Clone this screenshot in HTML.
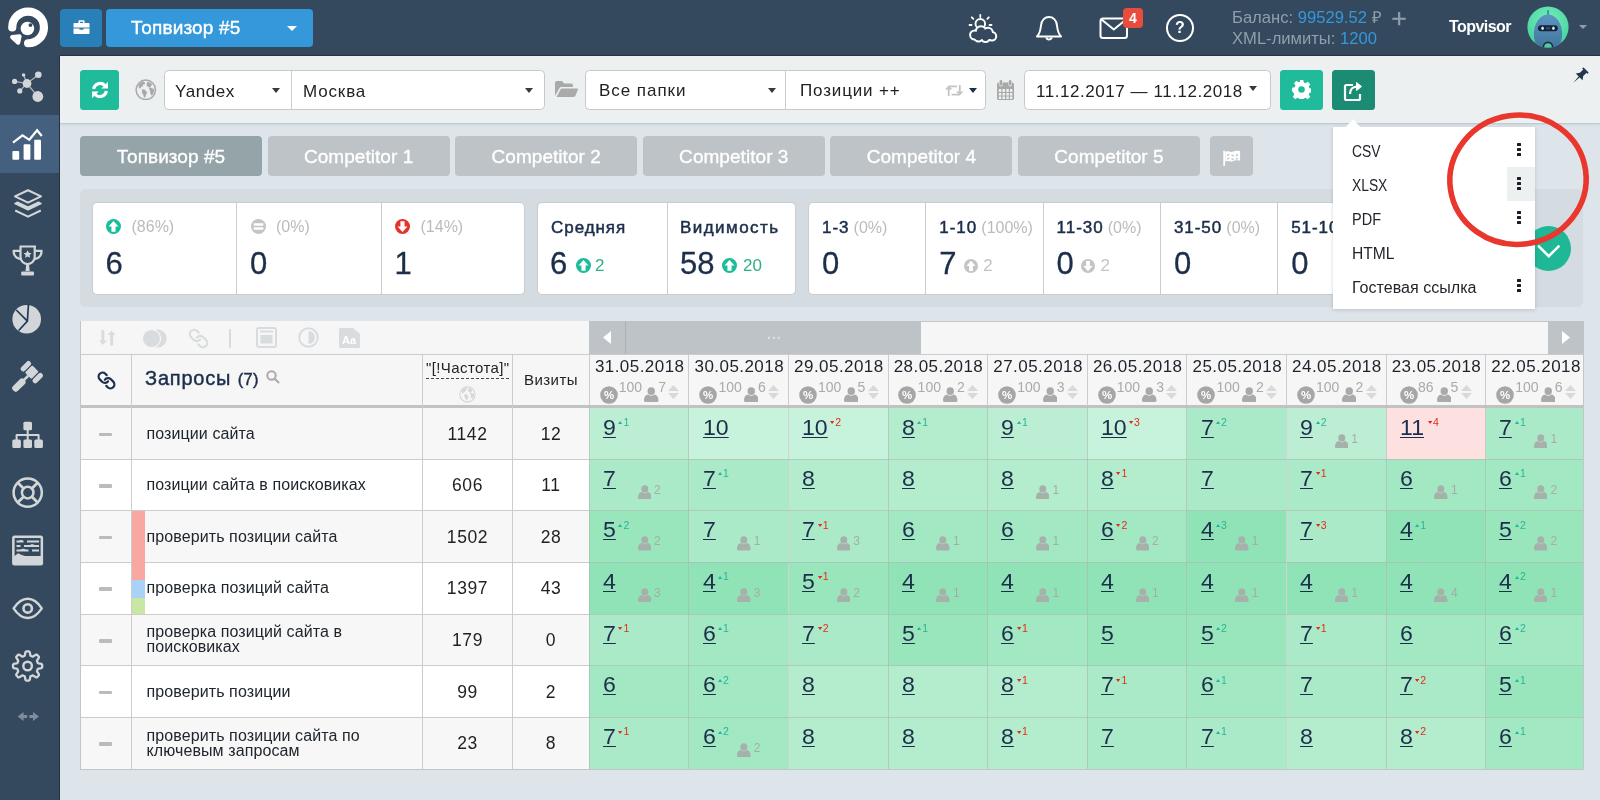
<!DOCTYPE html>
<html lang="ru"><head><meta charset="utf-8"><title>Топвизор</title><style>
*{box-sizing:border-box;margin:0;padding:0}
html,body{width:1600px;height:800px;overflow:hidden}
body{position:relative;background:#dee5ea;font-family:"Liberation Sans",sans-serif;color:#222;font-size:15px}
.a{position:absolute}
.t{position:absolute;white-space:nowrap;line-height:1}
#wrap{position:absolute;left:0;top:0;width:1600px;height:800px;will-change:transform}
#top{left:0;top:0;width:1600px;height:56px;background:#34495e;border-bottom:1px solid #1f2e3e}
#side{left:0;top:0;width:60px;height:800px;background:#34495e}
#sideb{left:59px;top:56px;width:1px;height:744px;background:#223243;z-index:3}
#toolbar{left:60px;top:56px;width:1540px;height:66.5px;background:#ecf0f1;box-shadow:0 1px 2px rgba(150,165,175,.6)}
.sel{position:absolute;top:69.500px;height:40px;background:#fff;border:1.500px solid #c6c9cb;border-radius:4.500px}
.sel .t{top:10px;font-size:17px;color:#222}
.caret{position:absolute;width:0;height:0;border-left:4.700px solid transparent;border-right:4.700px solid transparent;border-top:5px solid #3a3a3a}
.gbtn{position:absolute;top:69.500px;height:40px;border-radius:3.500px;background:#1fbb9b}
.tab{position:absolute;top:136px;height:40px;width:182px;border-radius:4px;background:#bdc3c7;color:#fff;font-size:19px;text-align:center;line-height:41.500px;letter-spacing:0.05px;-webkit-text-stroke:0.35px #fff}
.tab.act{background:#95a4a8}
#panel{left:80px;top:189px;width:1503px;height:118px;background:#d4dce1;border-radius:6px}
.card{position:absolute;top:202.300px;height:92.500px;background:#fff;border:1px solid #c8cdd0;border-radius:5px;overflow:hidden}
.cdiv{position:absolute;top:0;width:1px;height:93px;background:#ccc}
.big{position:absolute;white-space:nowrap;line-height:1;font-size:31px;color:#1c2e4a;top:248.300px;-webkit-text-stroke:0.3px #1c2e4a}
.pct{position:absolute;white-space:nowrap;line-height:1;font-size:16px;color:#bbb;top:219px}
.lbl{position:absolute;white-space:nowrap;line-height:1;font-size:17px;color:#1c2e4a;top:219px;letter-spacing:0.95px;-webkit-text-stroke:0.5px #1c2e4a}
.sm{position:absolute;white-space:nowrap;line-height:1;font-size:17px;top:257px}
#tbl{left:80px;top:320.500px;width:1504px;height:449px;background:#fff;border:1px solid #c2c6c9}
.vl{position:absolute;width:1px;background:#ccc}
.hl{position:absolute;height:1px;background:#ccc}
.kw{position:absolute;white-space:nowrap;line-height:15px;font-size:16px;color:#20262e;left:146.5px;letter-spacing:0.1px}
.num{position:absolute;white-space:nowrap;line-height:1;font-size:17.5px;color:#222;text-align:center;letter-spacing:0.6px}
.pos{position:absolute;white-space:nowrap;line-height:1;font-size:22px;color:#1c2e4a;text-decoration:underline;text-underline-offset:2.300px;text-decoration-thickness:1.100px;transform:scaleX(1.05);transform-origin:0 0}
.d{position:absolute;white-space:nowrap;line-height:1;font-size:10.5px}
.du{color:#2ab595}.dd{color:#e62a1a}
.vn{position:absolute;white-space:nowrap;line-height:1;font-size:12px;color:#a4ada8}
.date{position:absolute;white-space:nowrap;line-height:1;font-size:17px;color:#1d232b;top:358px;letter-spacing:0.45px}
.hs{position:absolute;white-space:nowrap;line-height:1;font-size:14px;color:#aaa}
.dash{position:absolute;left:98.5px;width:13.5px;height:3.5px;background:#bbb;border-radius:1px}
#dd{left:1333px;top:127px;width:202px;height:182px;background:#fff;box-shadow:0 1px 4px rgba(0,0,0,.16)}
.ddi{position:absolute;left:1351.800px;white-space:nowrap;line-height:1;font-size:16px;color:#22262c}
.dots{position:absolute;left:1517px;width:4px;height:14px}
.dots i{position:absolute;left:0;width:3.800px;height:2.800px;background:#1a1d24;border-radius:.6px}
</style></head><body><div id="wrap">
<div class="a" id="top"></div>
<div class="a" id="side"></div>
<div class="a" id="sideb"></div>
<div class="a" style="left:0;top:114.500px;width:60px;height:58.500px;background:#45607e"></div>
<div class="a" style="left:60.300px;top:8.500px;width:41.600px;height:38.500px;background:#2980b9;border-radius:4px"></div>
<svg class="a" style="left:73px;top:20px" width="17" height="15" viewBox="0 0 17 15"><path d="M5.5 3V1.2C5.5.6 6 .2 6.5.2h4c.6 0 1 .4 1 1V3h4c.6 0 1 .5 1 1v3.5H.5V4c0-.5.5-1 1-1zM7 3h3V1.7H7zM.5 8.5h6v1.3h4V8.5h6V13c0 .6-.4 1-1 1h-14c-.5 0-1-.4-1-1z" fill="#fff"/></svg>
<div class="a" style="left:106px;top:8.500px;width:206.800px;height:38.500px;background:#3498db;border-radius:4px"></div>
<div class="t" style="left:131px;top:18px;font-size:19px;color:#fff;letter-spacing:0.15px;-webkit-text-stroke:0.4px #fff">Топвизор #5</div>
<div class="a" style="left:287px;top:26.300px;width:0;height:0;border-left:5.200px solid transparent;border-right:5.200px solid transparent;border-top:5.400px solid #fff"></div>
<svg class="a" style="left:965px;top:10px" width="36" height="36" viewBox="0 0 36 36"><circle cx="15.300" cy="13.800" r="4.800" fill="none" stroke="#fff" stroke-width="1.900"/><g stroke="#fff" stroke-width="1.800" stroke-linecap="round"><path d="M15.300 4.800v2.200M6.800 7.300l1.500 1.500M23.800 7.300l-1.500 1.500M4.500 15h2M24.500 15h2"/></g><circle cx="9.7" cy="25.0" r="5.6" fill="#fff"/><circle cx="16.0" cy="21.5" r="6.3" fill="#fff"/><circle cx="23.0" cy="22.6" r="5.8" fill="#fff"/><circle cx="27.0" cy="26.2" r="5.2" fill="#fff"/><circle cx="13.5" cy="27.3" r="5.2" fill="#fff"/><circle cx="20.5" cy="27.6" r="5.4" fill="#fff"/><circle cx="9.7" cy="25.0" r="3.6" fill="#34495e"/><circle cx="16.0" cy="21.5" r="4.3" fill="#34495e"/><circle cx="23.0" cy="22.6" r="3.8" fill="#34495e"/><circle cx="27.0" cy="26.2" r="3.2" fill="#34495e"/><circle cx="13.5" cy="27.3" r="3.2" fill="#34495e"/><circle cx="20.5" cy="27.6" r="3.4" fill="#34495e"/><rect x="10" y="22" width="17" height="7" fill="#34495e"/></svg>
<svg class="a" style="left:1034px;top:14px" width="30" height="28" viewBox="0 0 30 28" fill="none" stroke="#fff" stroke-width="2" stroke-linejoin="round"><path d="M3 22.500c3-3 3.500-6 4-11C7.600 6 11 3 15 3s7.400 3 8 8.500c.5 5 1 8 4 11z"/><path d="M12.300 23.500a2.800 2.800 0 0 0 5.400 0"/></svg>
<svg class="a" style="left:1099px;top:17px" width="30" height="23" viewBox="0 0 30 23" fill="none" stroke="#fff" stroke-width="2" stroke-linejoin="round"><rect x="1.500" y="1.500" width="26.500" height="19.500" rx="2.500"/><path d="M2.500 2.500l12.300 10 12.300-10"/></svg>
<div class="a" style="left:1123px;top:8px;width:20px;height:20px;background:#e74c3c;border-radius:4px"></div>
<div class="t" style="left:1129px;top:11px;font-size:14px;color:#fff;font-weight:bold">4</div>
<div class="a" style="left:1166px;top:14px;width:28px;height:28px;border:2px solid #fff;border-radius:50%"></div>
<div class="t" style="left:1175px;top:20px;font-size:16px;color:#fff;font-weight:bold">?</div>
<div class="t" style="left:1232px;top:10px;font-size:16.6px;color:#8f9fab;letter-spacing:0px">Баланс: <span style="color:#3498db">99529.52</span> ₽</div>
<div class="t" style="left:1391.500px;top:4.500px;font-size:26px;color:#8f9fab;-webkit-text-stroke:0.4px #8f9fab">+</div>
<div class="t" style="left:1232px;top:31px;font-size:16.6px;color:#8f9fab;letter-spacing:0px">XML-лимиты: <span style="color:#3498db">1200</span></div>
<div class="t" style="left:1449px;top:19px;font-size:16px;color:#fff;font-weight:bold;letter-spacing:-0.55px">Topvisor</div>
<svg class="a" style="left:1527.400px;top:6.400px" width="42" height="42" viewBox="0 0 42 42"><defs><radialGradient id="av" cx="50%" cy="35%" r="65%"><stop offset="0" stop-color="#7aefbb"/><stop offset="1" stop-color="#43d3a0"/></radialGradient><linearGradient id="bd" x1="0" y1="0" x2="0" y2="1"><stop offset="0" stop-color="#5b97bf"/><stop offset="1" stop-color="#3f6f97"/></linearGradient><clipPath id="avc"><circle cx="21" cy="21" r="20.600"/></clipPath></defs><circle cx="21" cy="21" r="20.600" fill="url(#av)"/><g clip-path="url(#avc)"><rect x="20.300" y="4.200" width="1.500" height="6" fill="#2f7f86"/><ellipse cx="21" cy="28" rx="14.200" ry="19.500" fill="url(#bd)"/><rect x="11" y="19.300" width="19.800" height="6" rx="3" fill="#15223a"/><ellipse cx="15.600" cy="22.300" rx="1.300" ry="1.800" fill="#cdf3e8"/><ellipse cx="26.400" cy="22.300" rx="1.300" ry="1.800" fill="#cdf3e8"/><rect x="18.800" y="21" width="4.400" height="2.600" rx="1" fill="#3a4a66"/><circle cx="21" cy="41" r="4.600" fill="#55c9a0" stroke="#1b2c47" stroke-width="1.700"/></g></svg>
<div class="caret" style="left:1579px;top:25px;border-top-color:#8fa0ad;border-width:4px 4px 0 4px;border-left:4px solid transparent;border-right:4px solid transparent;border-top:4px solid #8fa0ad"></div>
<svg class="a" style="left:0;top:0" width="60" height="800" viewBox="0 0 60 800"><path d="M12.25 27.4A15.85 15.85 0 1 1 28.1 43.25" fill="none" stroke="#fff" stroke-width="8.2" stroke-linecap="round"/><path d="M12.2 37.2L19.500 36.4 18.200 42.600z" fill="#fff" stroke="#fff" stroke-width="4.200" stroke-linejoin="round"/><circle cx="27.4" cy="28.5" r="6.8" fill="#fff"/><circle cx="30.4" cy="25.1" r="1.9" fill="#34495e"/><g stroke="#aeb6bd" stroke-width="1.200"><path d="M27 83.5L23.6 75M27 83.5L38.3 74.7M27 83.5L14.6 81.4M27 83.5L19.8 90.9M27 83.5L37.8 96.5" fill="none"/></g><g fill="#d3d6d8"><circle cx="27" cy="83.5" r="4.4"/><circle cx="23.6" cy="75" r="1.8"/><circle cx="38.3" cy="74.7" r="3.3"/><circle cx="14.6" cy="81.4" r="2.6"/><circle cx="19.8" cy="90.9" r="2.6"/><circle cx="37.8" cy="96.5" r="5.4"/></g><path d="M13 142.7L22.5 135.3 29.3 139.8 37.1 130.3 41.8 136" fill="none" stroke="#fff" stroke-width="2.2" stroke-linejoin="miter"/><g fill="#fff"><rect x="12.4" y="151" width="6.8" height="8.8" rx="1"/><rect x="23.6" y="144.3" width="6.8" height="15.5" rx="1"/><rect x="34.2" y="139.8" width="6.8" height="20" rx="1"/></g><g fill="none" stroke="#d3d6d8" stroke-width="2.1" stroke-linejoin="round"><path d="M28 190.2L41 196.4 28 202.6 15 196.4z"/><path d="M15.2 210.5L28 216.6 40.8 210.5"/></g><path d="M17.5 202.2L28 207.2 38.500 202.200 41 203.600 28 209.800 15 203.600z" fill="#d3d6d8" stroke="#d3d6d8" stroke-width="1.600" stroke-linejoin="round"/><g fill="none" stroke="#d3d6d8" stroke-width="2.2" stroke-linejoin="round"><path d="M19.500 246.500h16.500M20.500 247v10a7.100 7.100 0 0 0 14.200 0v-10"/><path d="M20 250.800h-6.400c0 5 2.600 7.600 7.600 8.400M35.200 250.800h6.400c0 5-2.600 7.600-7.600 8.400"/></g><path d="M26.300 263.500h2.600l.8 7.500h-4.200zM22.500 271.500h10.200c.8 0 1.300.5 1.300 1.300v1.500c0 .8-.5 1.300-1.300 1.300H22.500c-.8 0-1.300-.5-1.300-1.300v-1.500c0-.8.500-1.300 1.300-1.300z" fill="#d3d6d8"/><path d="M27.600 250.300l1.300 2.500 2.700.4-2 1.900.5 2.700-2.500-1.300-2.500 1.300.5-2.700-2-1.900 2.700-.4z" fill="#d3d6d8"/><circle cx="26.700" cy="319.200" r="14.300" fill="#d3d6d8"/><path d="M28.500 303.500L27.400 321.200 18.700 330.500M16.300 310L27.400 321.200" fill="none" stroke="#1f3a5c" stroke-width="1.700"/><g transform="translate(31.8 372.2) rotate(45)" fill="#d3d6d8"><rect x="-11" y="-6.200" width="5.200" height="12.400" rx="2.300"/><rect x="-4.600" y="-5.200" width="9.200" height="10.400" rx="1.200"/><rect x="5.800" y="-6.200" width="5.200" height="12.400" rx="2.300"/><rect x="-1.300" y="5" width="2.600" height="7"/><rect x="-3.400" y="10.500" width="6.800" height="15.500" rx="3"/></g><g fill="#d3d6d8"><rect x="23.400" y="421.700" width="8.600" height="8.600" rx="1.500"/><rect x="12.300" y="439.400" width="8.600" height="8.600" rx="1.500"/><rect x="23.400" y="439.400" width="8.600" height="8.600" rx="1.500"/><rect x="34.300" y="439.400" width="8.600" height="8.600" rx="1.500"/></g><path d="M27.700 430v10M16.600 440v-5h22v5" fill="none" stroke="#d3d6d8" stroke-width="2" stroke-linejoin="round"/><g fill="none" stroke="#d3d6d8"><circle cx="27.700" cy="492.600" r="14.100" stroke-width="2.500"/><circle cx="27.700" cy="492.600" r="5.800" stroke-width="2.500"/><path d="M18 482.900l5.300 5.300M37.400 482.900l-5.300 5.300M18 502.300l5.300-5.300M37.400 502.300l-5.300-5.300" stroke-width="2.800"/></g><rect x="12.100" y="535.500" width="31" height="30" rx="2.500" fill="#d3d6d8"/><rect x="14.600" y="538" width="26" height="18" fill="#34495e"/><path d="M16.500 541.500h7M27 541.500h12M16.500 546h4M24 546h15M16.500 550.500h12M32 550.500h7" stroke="#d3d6d8" stroke-width="1.900" fill="none"/><path d="M19 541.500c1-2 3-2 4 0zM29 546c1.500-2.500 5-2.500 6.500 0zM20 550.500c1.500-2.500 5-2.500 6.500 0z" fill="#d3d6d8"/><path d="M14.600 556l3.500-2.800 3 1.500 4 1.300z" fill="#d3d6d8"/><g fill="none" stroke="#d3d6d8" stroke-width="2.400" stroke-linejoin="round"><path d="M13.600 608.400C18 601.800 22.500 598.800 27.700 598.800S37.400 601.800 41.800 608.400C37.400 615 32.900 618 27.700 618S18 615 13.600 608.400z"/><circle cx="27.700" cy="608.400" r="4.200" stroke-width="2.600"/></g><path d="M42.20 666.00L42.18 666.72L42.13 667.43L41.50 668.06L39.96 668.46L38.41 668.71L37.74 669.08L37.58 669.57L37.39 670.06L37.18 670.53L36.95 671.00L37.16 671.73L38.08 673.00L38.89 674.37L38.89 675.26L38.42 675.80L37.92 676.32L37.40 676.82L36.86 677.29L35.97 677.29L34.60 676.48L33.33 675.56L32.60 675.35L32.13 675.58L31.66 675.79L31.17 675.98L30.68 676.14L30.31 676.81L30.06 678.36L29.66 679.90L29.03 680.53L28.32 680.58L27.60 680.60L26.88 680.58L26.17 680.53L25.54 679.90L25.14 678.36L24.89 676.81L24.52 676.14L24.03 675.98L23.54 675.79L23.07 675.58L22.60 675.35L21.87 675.56L20.60 676.48L19.23 677.29L18.34 677.29L17.80 676.82L17.28 676.32L16.78 675.80L16.31 675.26L16.31 674.37L17.12 673.00L18.04 671.73L18.25 671.00L18.02 670.53L17.81 670.06L17.62 669.57L17.46 669.08L16.79 668.71L15.24 668.46L13.70 668.06L13.07 667.43L13.02 666.72L13.00 666.00L13.02 665.28L13.07 664.57L13.70 663.94L15.24 663.54L16.79 663.29L17.46 662.92L17.62 662.43L17.81 661.94L18.02 661.47L18.25 661.00L18.04 660.27L17.12 659.00L16.31 657.63L16.31 656.74L16.78 656.20L17.28 655.68L17.80 655.18L18.34 654.71L19.23 654.71L20.60 655.52L21.87 656.44L22.60 656.65L23.07 656.42L23.54 656.21L24.03 656.02L24.52 655.86L24.89 655.19L25.14 653.64L25.54 652.10L26.17 651.47L26.88 651.42L27.60 651.40L28.32 651.42L29.03 651.47L29.66 652.10L30.06 653.64L30.31 655.19L30.68 655.86L31.17 656.02L31.66 656.21L32.13 656.42L32.60 656.65L33.33 656.44L34.60 655.52L35.97 654.71L36.86 654.71L37.40 655.18L37.92 655.68L38.42 656.20L38.89 656.74L38.89 657.63L38.08 659.00L37.16 660.27L36.95 661.00L37.18 661.47L37.39 661.94L37.58 662.43L37.74 662.92L38.41 663.29L39.96 663.54L41.50 663.94L42.13 664.57L42.18 665.28L42.20 666.00z" fill="none" stroke="#d3d6d8" stroke-width="2.300" stroke-linejoin="round"/><circle cx="27.600" cy="666" r="4.300" fill="none" stroke="#d3d6d8" stroke-width="2.400"/><path d="M17.600 716.500l6-4.500v3h3.600v3h-3.600v3zM39 716.500l-6-4.500v3h-3.600v3h3.600v3z" fill="#7f8c9b"/></svg>
<div class="a" id="toolbar"></div>
<div class="gbtn" style="left:79.700px;width:39.500px"></div>
<svg class="a" style="left:91px;top:81px" width="18" height="18" viewBox="0 0 18 18" fill="none" stroke="#fff" stroke-width="3.100"><path d="M2.600 8A6.600 6.600 0 0 1 13.800 4.400"/><path d="M15.400 10A6.600 6.600 0 0 1 4.200 13.600"/><path d="M17 .8v6.700h-6.700z" fill="#fff" stroke="none"/><path d="M1 17.200v-6.700h6.700z" fill="#fff" stroke="none"/></svg>
<svg class="a" style="left:135.1px;top:78.5px;opacity:1" width="21.6" height="21.6" viewBox="0 0 22 22"><circle cx="11" cy="11" r="9.900" fill="none" stroke="#a9a9a9" stroke-width="1.500"/><path d="M3.500 6.500c1-1.800 2.800-3.300 4.800-3.900l2 .9-.3 1.800-1.800.6-.4 1.800-1.700.4-.5 1.600-1.500-.4zM7 10.800l2.200-.3 1.800 1.400 1.400 2.200-1.200 2-.6 2.600-1.500.2-.7-2.800-1.300-2.200zM12.500 2.700c2 .3 3.800 1.300 5.200 2.800l-1.200 1-.4 1.600-1.800.8-1-1.300-1.600-.4.300-2.100zM14.200 9.500l2.400-.6 1.600 1 1.300-.2c.2 1.800-.1 3.500-.9 5l-1.700 2.300-1.300-2.500-.3-2.300z" fill="#a9a9a9"/></svg>
<div class="sel" style="left:164px;width:381px"></div>
<div class="a" style="left:291px;top:70.500px;width:1px;height:38px;background:#ccc"></div>
<div class="t" style="left:175px;top:82.5px;font-size:17px;color:#222;letter-spacing:0.55px">Yandex</div>
<div class="caret" style="left:271.500px;top:87.500px"></div>
<div class="t" style="left:303px;top:82.5px;font-size:17px;color:#222;letter-spacing:0.85px">Москва</div>
<div class="caret" style="left:524.500px;top:87.500px"></div>
<svg class="a" style="left:555px;top:81px" width="23" height="16" viewBox="0 0 23 16" fill="#aaa"><path d="M0 2C0 .9.900 0 2 0h5l2 2.500h7c1.100 0 2 .9 2 2V6H6.500c-1 0-1.800.6-2.200 1.500L0 15z"/><path d="M5.500 8.500c.3-.7.900-1.100 1.600-1.100H22c.8 0 1.200.7.900 1.400l-2.500 6c-.3.700-.9 1.200-1.700 1.200H1.500z"/></svg>
<div class="sel" style="left:585px;width:401px"></div>
<div class="a" style="left:785px;top:70.500px;width:1px;height:38px;background:#ccc"></div>
<div class="t" style="left:599px;top:81.5px;font-size:17px;color:#222;letter-spacing:0.95px">Все папки</div>
<div class="caret" style="left:767.500px;top:88px"></div>
<div class="t" style="left:800px;top:81.5px;font-size:17px;color:#222;letter-spacing:0.85px">Позиции ++</div>
<svg class="a" style="left:944.500px;top:83.800px" width="18.500" height="13" viewBox="0 0 20 14" fill="none" stroke="#c4c4c4" stroke-width="2"><path d="M4 13V3.500M16 1v9.500"/><path d="M4 2.500h9M7 11.500h9"/><path d="M0 6l4-4.500L8 6zM12 8l4 4.500L20 8z" fill="#c4c4c4" stroke="none"/></svg>
<div class="caret" style="left:968.500px;top:88.300px;border-top-color:#1c2e4a"></div>
<svg class="a" style="left:997.200px;top:79.500px" width="17" height="20" viewBox="0 0 17 20" fill="#a8a8a8"><rect x="2.600" y="0" width="2.600" height="5.500" rx="1.300"/><rect x="11.800" y="0" width="2.600" height="5.500" rx="1.300"/><path d="M0 4.500C0 3.400.800 2.600 1.800 2.600h.300v2c0 1.200.700 1.800 1.800 1.800s1.800-.6 1.800-1.800v-2h5.600v2c0 1.200.7 1.800 1.800 1.800s1.800-.6 1.800-1.800v-2h.300c1 0 1.800.8 1.800 1.900v13.700c0 1-.8 1.800-1.800 1.800H1.800C.800 20 0 19.200 0 18.200z"/><g fill="#ecf0f1"><rect x="1.8" y="9.0" width="2.500" height="3.0"/><rect x="5.5" y="9.0" width="2.500" height="3.0"/><rect x="9.3" y="9.0" width="2.500" height="3.0"/><rect x="12.9" y="9.0" width="2.500" height="3.0"/><rect x="1.8" y="13.0" width="2.500" height="2.6"/><rect x="5.5" y="13.0" width="2.500" height="2.6"/><rect x="9.3" y="13.0" width="2.500" height="2.6"/><rect x="12.9" y="13.0" width="2.500" height="2.6"/><rect x="1.8" y="16.5" width="2.500" height="2.5"/><rect x="5.5" y="16.5" width="2.500" height="2.5"/><rect x="9.3" y="16.5" width="2.500" height="2.5"/><rect x="12.9" y="16.5" width="2.500" height="2.5"/></g></svg>
<div class="sel" style="left:1024px;width:247px"></div>
<div class="t" style="left:1036px;top:82.5px;font-size:17px;color:#222;letter-spacing:0.55px">11.12.2017 — 11.12.2018</div>
<div class="caret" style="left:1249px;top:86px"></div>
<div class="gbtn" style="left:1280.200px;width:42.500px"></div>
<svg class="a" style="left:1292px;top:80px" width="19" height="19" viewBox="0 0 32 32"><path d="M13 0h6l.9 4.300 2.900 1.200 3.700-2.500 4.200 4.200-2.500 3.700 1.200 2.900 4.600.9v6l-4.600.9-1.200 2.900 2.500 3.700-4.200 4.200-3.700-2.500-2.900 1.200-.9 4.600h-6l-.9-4.600-2.900-1.200-3.700 2.500-4.200-4.200 2.500-3.700-1.200-2.900L0 19v-6l4.600-.9 1.200-2.900-2.500-3.700 4.200-4.200 3.700 2.500 2.900-1.200z" fill="#fff"/><circle cx="16" cy="16" r="5.500" fill="#1abc9c"/></svg>
<div class="gbtn" style="left:1332px;width:42.500px;background:#1c8b73"></div>
<svg class="a" style="left:1343px;top:80.500px" width="21" height="21" viewBox="0 0 21 21" fill="none" stroke="#fff" stroke-width="2.200" stroke-linejoin="round"><path d="M10 4H3.500C2.400 4 2 4.600 2 5.500v12c0 .9.600 1.500 1.500 1.500h12c.9 0 1.500-.6 1.500-1.500V13"/><path d="M7 13c0-5 3-7.500 8-7.500" /><path d="M13.500 1.500l5 4-5 4z" fill="#fff" stroke-width="1"/></svg>
<svg class="a" style="left:1570px;top:66px" width="20" height="20" viewBox="-10 -10 20 20" fill="#22344c"><g transform="rotate(45)"><rect x="-3.800" y="-8.600" width="7.600" height="1.900" rx=".6"/><rect x="-2.300" y="-7" width="4.600" height="5.500"/><path d="M-2.300 -2.200L-4.800 1.200H4.800L2.300 -2.200z"/><path d="M-.75 1h1.500L0 9.500z"/></g></svg>
<div class="tab act" style="left:80.0px">Топвизор #5</div>
<div class="tab" style="left:267.6px">Competitor 1</div>
<div class="tab" style="left:455.2px">Competitor 2</div>
<div class="tab" style="left:642.8px">Competitor 3</div>
<div class="tab" style="left:830.4px">Competitor 4</div>
<div class="tab" style="left:1018.0px">Competitor 5</div>
<div class="a" style="left:1210px;top:136px;width:43px;height:40px;border-radius:4px;background:#bdc3c7"></div>
<svg class="a" style="left:1223px;top:149.500px" width="18" height="17" viewBox="0 0 18 17"><rect x=".3" y=".4" width="1.700" height="15.600" rx=".85" fill="#fff"/><path d="M2.300 1.900c2.500-1.600 4.800.8 7.300-.2s4.300-1.300 7.500-.5v9.600c-3.200-.8-5-.5-7.500.5s-4.800-1.400-7.300.2z" fill="#fff"/><path d="M4 4.600l2.200-1 .1 1.600-2.200 1zM8.500 4.500l2.300.6v1.500l-2.300-.6zM12.800 4.800l2.300-1v1.600l-2.300 1zM4 8.300l2.200-1 .1 1.500-2.200 1zM8.500 8.100l2.300.6v1.500l-2.300-.6zM12.800 8.400l2.300-1v1.600l-2.300 1z" fill="#c3c8cc"/></svg>
<div class="a" id="panel"></div>
<div class="card" style="left:92px;width:433px"><div class="cdiv" style="left:143px"></div><div class="cdiv" style="left:288px"></div></div>
<svg class="a" style="left:106.0px;top:219.3px" width="15" height="15" viewBox="0 0 16 16"><circle cx="8" cy="8" r="8" fill="#1abc9c"/><path d="M8 2.100l5.300 5.900H10.200v5.600H5.800V8H2.700z" fill="#fff"/></svg>
<div class="pct" style="left:131.5px">(86%)</div>
<div class="big" style="left:105.5px">6</div>
<svg class="a" style="left:250.5px;top:219.3px" width="15" height="15" viewBox="0 0 16 16"><circle cx="8" cy="8" r="8" fill="#c4c4c4"/><rect x="2.800" y="4.500" width="10.400" height="2.600" rx=".5" fill="#fff"/><rect x="2.800" y="8.900" width="10.400" height="2.600" rx=".5" fill="#fff"/></svg>
<div class="pct" style="left:276.0px">(0%)</div>
<div class="big" style="left:250.0px">0</div>
<svg class="a" style="left:395.0px;top:219.3px" width="15" height="15" viewBox="0 0 16 16"><circle cx="8" cy="8" r="8" fill="#e5332a"/><path d="M8 13.900l5.300-5.900H10.200V2.400H5.800V8H2.700z" fill="#fff"/></svg>
<div class="pct" style="left:420.5px">(14%)</div>
<div class="big" style="left:394.5px">1</div>
<div class="card" style="left:537px;width:259px"><div class="cdiv" style="left:129px"></div></div>
<div class="lbl" style="left:551px">Средняя</div>
<div class="big" style="left:550px">6</div>
<svg class="a" style="left:575.5px;top:258.3px" width="15" height="15" viewBox="0 0 16 16"><circle cx="8" cy="8" r="8" fill="#1abc9c"/><path d="M8 2.100l5.300 5.900H10.200v5.600H5.800V8H2.700z" fill="#fff"/></svg>
<div class="sm" style="left:595px;color:#2eb086">2</div>
<div class="lbl" style="left:680px;letter-spacing:1.450px">Видимость</div>
<div class="big" style="left:680px">58</div>
<svg class="a" style="left:722.0px;top:258.3px" width="15" height="15" viewBox="0 0 16 16"><circle cx="8" cy="8" r="8" fill="#1abc9c"/><path d="M8 2.100l5.300 5.900H10.200v5.600H5.800V8H2.700z" fill="#fff"/></svg>
<div class="sm" style="left:743px;color:#2eb086">20</div>
<div class="card" style="left:808px;width:712px"><div class="cdiv" style="left:116.3px"></div><div class="cdiv" style="left:233.6px"></div><div class="cdiv" style="left:350.9px"></div><div class="cdiv" style="left:468.2px"></div><div class="cdiv" style="left:585.5px"></div></div>
<div class="lbl" style="left:822.0px">1-3 <span style="-webkit-text-stroke:0;letter-spacing:0;color:#bbb;font-size:16px;margin-left:-1.500px">(0%)</span></div>
<div class="big" style="left:822.0px">0</div>
<div class="lbl" style="left:939.3px">1-10 <span style="-webkit-text-stroke:0;letter-spacing:0;color:#bbb;font-size:16px;margin-left:-1.500px">(100%)</span></div>
<div class="big" style="left:939.3px">7</div>
<svg class="a" style="left:963.8px;top:259.0px" width="14" height="14" viewBox="0 0 16 16"><circle cx="8" cy="8" r="8" fill="#c4c4c4"/><path d="M8 2.100l5.300 5.900H10.200v5.600H5.800V8H2.700z" fill="#fff"/></svg>
<div class="sm" style="left:983.3px;color:#c4c4c4">2</div>
<div class="lbl" style="left:1056.6px">11-30 <span style="-webkit-text-stroke:0;letter-spacing:0;color:#bbb;font-size:16px;margin-left:-1.500px">(0%)</span></div>
<div class="big" style="left:1056.6px">0</div>
<svg class="a" style="left:1081.1px;top:259.0px" width="14" height="14" viewBox="0 0 16 16"><circle cx="8" cy="8" r="8" fill="#c4c4c4"/><path d="M8 13.900l5.300-5.900H10.200V2.400H5.800V8H2.700z" fill="#fff"/></svg>
<div class="sm" style="left:1100.6px;color:#c4c4c4">2</div>
<div class="lbl" style="left:1173.9px">31-50 <span style="-webkit-text-stroke:0;letter-spacing:0;color:#bbb;font-size:16px;margin-left:-1.500px">(0%)</span></div>
<div class="big" style="left:1173.9px">0</div>
<div class="lbl" style="left:1291.2px">51-100 <span style="-webkit-text-stroke:0;letter-spacing:0;color:#bbb;font-size:16px;margin-left:-1.500px">(0%)</span></div>
<div class="big" style="left:1291.2px">0</div>
<div class="lbl" style="left:1408.5px">101+ <span style="-webkit-text-stroke:0;letter-spacing:0;color:#bbb;font-size:16px;margin-left:-1.500px">(0%)</span></div>
<div class="big" style="left:1408.5px">0</div>
<div class="a" style="left:1526.300px;top:225.600px;width:45px;height:45px;border-radius:50%;background:#1fb896"></div>
<svg class="a" style="left:1534px;top:240px" width="30" height="22" viewBox="0 0 30 22" fill="none" stroke="#fff" stroke-width="2.500"><path d="M4.100 5.600l10.650 10.650L25.400 5.600"/></svg>
<div class="a" id="tbl"></div>
<div class="a" style="left:81px;top:321px;width:508px;height:33px;background:#f6f6f6"></div>
<div class="a" style="left:81px;top:355px;width:1502px;height:50px;background:#f6f6f6"></div>
<div class="a" style="left:589px;top:321px;width:36px;height:33px;background:#bdc3c7"></div>
<div class="a" style="left:625px;top:321px;width:296px;height:33px;background:#bdc3c7;border-left:1px solid #aab1b6"></div>
<div class="a" style="left:921px;top:321.500px;width:627px;height:33px;background:#f6f6f6"></div>
<div class="a" style="left:1548px;top:321px;width:35.500px;height:33.500px;background:#bdc3c7"></div>
<svg class="a" style="left:603px;top:331px" width="8" height="13" viewBox="0 0 8 13"><path d="M8 0v13L0 6.500z" fill="#fff"/></svg>
<svg class="a" style="left:1562px;top:331px" width="8" height="13" viewBox="0 0 8 13"><path d="M0 0v13l8-6.500z" fill="#fff"/></svg>
<div class="t" style="left:767px;top:327px;font-size:14px;color:#dde0e3;letter-spacing:1px;font-weight:bold">...</div>
<svg class="a" style="left:98.500px;top:330px" width="16.500" height="15.500" viewBox="0 0 18 17" fill="#d9dcde"><path d="M2.600 0h3.200v11.500H8.500l-4.300 5L0 11.500H2.600zM12.200 17h3.200V5.500H18L13.800.5 9.500 5.500h2.700z"/></svg>
<svg class="a" style="left:142px;top:328.500px" width="25" height="19" viewBox="0 0 26 20" fill="#d9dcde"><circle cx="16.200" cy="10" r="9.600"/><circle cx="9.800" cy="10" r="9.600" stroke="#f6f6f6" stroke-width="1.200"/></svg>
<svg class="a" style="left:187.500px;top:327.500px" width="21" height="21" viewBox="0 0 24 24" fill="none" stroke="#d9dcde" stroke-width="2.400" stroke-linecap="round" stroke-linejoin="round"><g transform="translate(24 0) scale(-1 1)"><path d="M10 13a5 5 0 0 0 7.540.540l3-3a5 5 0 0 0-7.070-7.070l-1.720 1.710"/><path d="M14 11a5 5 0 0 0-7.540-.540l-3 3a5 5 0 0 0 7.070 7.070l1.710-1.710"/></g></svg>
<div class="a" style="left:229px;top:329px;width:2px;height:19px;background:#d9dcde"></div>
<svg class="a" style="left:256px;top:327px" width="21" height="21" viewBox="0 0 21 21" fill="none" stroke="#d9dcde" stroke-width="2"><rect x="1" y="1" width="19" height="19" rx="2"/><rect x="4.500" y="8" width="12" height="8.500" fill="#d9dcde" stroke="none"/><path d="M4 4.500h13"/></svg>
<svg class="a" style="left:298px;top:327px" width="21" height="21" viewBox="0 0 21 21"><circle cx="10.500" cy="10.500" r="9.300" fill="none" stroke="#d9dcde" stroke-width="2"/><path d="M10.500 4a6.500 6.500 0 0 1 0 13z" fill="#d9dcde"/></svg>
<svg class="a" style="left:339px;top:328px" width="21" height="20" viewBox="0 0 21 20"><path d="M0 1.500C0 .7.700 0 1.500 0H14l7 6v12.500c0 .8-.7 1.500-1.500 1.500h-18C.7 20 0 19.300 0 18.500z" fill="#d9dcde"/><text x="3" y="15.500" font-family="Liberation Sans, sans-serif" font-size="11" font-weight="bold" fill="#fff">Aa</text></svg>
<div class="a" style="left:81px;top:408.0px;width:508px;height:51.0px;background:#f7f7f7"></div>
<div class="a" style="left:81px;top:459.0px;width:508px;height:51.7px;background:#fff"></div>
<div class="a" style="left:81px;top:510.6px;width:508px;height:51.7px;background:#f7f7f7"></div>
<div class="a" style="left:81px;top:562.3px;width:508px;height:51.7px;background:#fff"></div>
<div class="a" style="left:81px;top:614.0px;width:508px;height:51.7px;background:#f7f7f7"></div>
<div class="a" style="left:81px;top:665.7px;width:508px;height:51.7px;background:#fff"></div>
<div class="a" style="left:81px;top:717.3px;width:508px;height:51.7px;background:#f7f7f7"></div>
<div class="dash" style="top:432.7px"></div>
<div class="kw" style="top:425.5px">позиции сайта</div>
<div class="num" style="left:423px;width:89px;top:425.5px">1142</div>
<div class="num" style="left:513px;width:76px;top:425.5px">12</div>
<div class="a" style="left:589.3px;top:408.0px;width:99.6px;height:51.0px;background:#bceed4"></div>
<div class="pos" style="left:602.9px;top:416.7px">9</div>
<div class="d du" style="left:618.4px;top:417.0px"><svg width="4.200" height="3" viewBox="0 0 5 4" preserveAspectRatio="none" style="position:relative;top:-1.600px;margin-right:0.900px"><path d="M0 4L2.500 0 5 4z" fill="#1abc9c"/></svg>1</div>
<div class="a" style="left:688.9px;top:408.0px;width:99.6px;height:51.0px;background:#c7f2db"></div>
<div class="pos" style="left:702.5px;top:416.7px">10</div>
<div class="a" style="left:788.5px;top:408.0px;width:99.6px;height:51.0px;background:#c7f2db"></div>
<div class="pos" style="left:802.1px;top:416.7px">10</div>
<div class="d dd" style="left:830.2px;top:417.0px"><svg width="4.200" height="3" viewBox="0 0 5 4" preserveAspectRatio="none" style="position:relative;top:-1.600px;margin-right:0.900px"><path d="M0 0L2.500 4 5 0z" fill="#e62a1a"/></svg>2</div>
<div class="a" style="left:888.1px;top:408.0px;width:99.6px;height:51.0px;background:#b3edcd"></div>
<div class="pos" style="left:901.7px;top:416.7px">8</div>
<div class="d du" style="left:917.2px;top:417.0px"><svg width="4.200" height="3" viewBox="0 0 5 4" preserveAspectRatio="none" style="position:relative;top:-1.600px;margin-right:0.900px"><path d="M0 4L2.500 0 5 4z" fill="#1abc9c"/></svg>1</div>
<div class="a" style="left:987.7px;top:408.0px;width:99.6px;height:51.0px;background:#bceed4"></div>
<div class="pos" style="left:1001.3px;top:416.7px">9</div>
<div class="d du" style="left:1016.8px;top:417.0px"><svg width="4.200" height="3" viewBox="0 0 5 4" preserveAspectRatio="none" style="position:relative;top:-1.600px;margin-right:0.900px"><path d="M0 4L2.500 0 5 4z" fill="#1abc9c"/></svg>1</div>
<div class="a" style="left:1087.3px;top:408.0px;width:99.6px;height:51.0px;background:#c7f2db"></div>
<div class="pos" style="left:1100.9px;top:416.7px">10</div>
<div class="d dd" style="left:1129.0px;top:417.0px"><svg width="4.200" height="3" viewBox="0 0 5 4" preserveAspectRatio="none" style="position:relative;top:-1.600px;margin-right:0.900px"><path d="M0 0L2.500 4 5 0z" fill="#e62a1a"/></svg>3</div>
<div class="a" style="left:1186.9px;top:408.0px;width:99.6px;height:51.0px;background:#abeac8"></div>
<div class="pos" style="left:1200.5px;top:416.7px">7</div>
<div class="d du" style="left:1216.0px;top:417.0px"><svg width="4.200" height="3" viewBox="0 0 5 4" preserveAspectRatio="none" style="position:relative;top:-1.600px;margin-right:0.900px"><path d="M0 4L2.500 0 5 4z" fill="#1abc9c"/></svg>2</div>
<div class="a" style="left:1286.5px;top:408.0px;width:99.6px;height:51.0px;background:#bceed4"></div>
<div class="pos" style="left:1300.1px;top:416.7px">9</div>
<div class="d du" style="left:1315.6px;top:417.0px"><svg width="4.200" height="3" viewBox="0 0 5 4" preserveAspectRatio="none" style="position:relative;top:-1.600px;margin-right:0.900px"><path d="M0 4L2.500 0 5 4z" fill="#1abc9c"/></svg>2</div>
<svg class="a" style="left:1334.7px;top:433.6px" width="13.6" height="14.4" viewBox="0 0 14 14" preserveAspectRatio="none" fill="#a7b1ab"><circle cx="7" cy="3.800" r="3.600"/><path d="M0 12.500C0 8.500 2 7 4 6.800c.9.800 1.900 1.200 3 1.200s2.100-.4 3-1.200c2 .2 4 1.700 4 5.700 0 .9-.6 1.500-1.500 1.500h-11C.6 14 0 13.400 0 12.500z"/></svg>
<div class="vn" style="left:1351.3px;top:432.5px">1</div>
<div class="a" style="left:1386.1px;top:408.0px;width:99.6px;height:51.0px;background:#fde0e0"></div>
<div class="pos" style="left:1399.7px;top:416.7px">11</div>
<div class="d dd" style="left:1427.8px;top:417.0px"><svg width="4.200" height="3" viewBox="0 0 5 4" preserveAspectRatio="none" style="position:relative;top:-1.600px;margin-right:0.900px"><path d="M0 0L2.500 4 5 0z" fill="#e62a1a"/></svg>4</div>
<div class="a" style="left:1485.7px;top:408.0px;width:97.8px;height:51.0px;background:#abeac8"></div>
<div class="pos" style="left:1499.3px;top:416.7px">7</div>
<div class="d du" style="left:1514.8px;top:417.0px"><svg width="4.200" height="3" viewBox="0 0 5 4" preserveAspectRatio="none" style="position:relative;top:-1.600px;margin-right:0.900px"><path d="M0 4L2.500 0 5 4z" fill="#1abc9c"/></svg>1</div>
<svg class="a" style="left:1533.9px;top:433.6px" width="13.6" height="14.4" viewBox="0 0 14 14" preserveAspectRatio="none" fill="#a7b1ab"><circle cx="7" cy="3.800" r="3.600"/><path d="M0 12.500C0 8.500 2 7 4 6.800c.9.800 1.900 1.200 3 1.200s2.100-.4 3-1.200c2 .2 4 1.700 4 5.700 0 .9-.6 1.500-1.500 1.500h-11C.6 14 0 13.400 0 12.500z"/></svg>
<div class="vn" style="left:1550.5px;top:432.5px">1</div>
<div class="dash" style="top:484.0px"></div>
<div class="kw" style="top:476.8px">позиции сайта в поисковиках</div>
<div class="num" style="left:423px;width:89px;top:476.8px">606</div>
<div class="num" style="left:513px;width:76px;top:476.8px">11</div>
<div class="a" style="left:589.3px;top:459.0px;width:99.6px;height:51.7px;background:#abeac8"></div>
<div class="pos" style="left:602.9px;top:467.7px">7</div>
<svg class="a" style="left:637.5px;top:484.6px" width="13.6" height="14.4" viewBox="0 0 14 14" preserveAspectRatio="none" fill="#a7b1ab"><circle cx="7" cy="3.800" r="3.600"/><path d="M0 12.500C0 8.500 2 7 4 6.800c.9.800 1.900 1.200 3 1.200s2.100-.4 3-1.200c2 .2 4 1.700 4 5.700 0 .9-.6 1.500-1.500 1.500h-11C.6 14 0 13.400 0 12.500z"/></svg>
<div class="vn" style="left:654.1px;top:483.5px">2</div>
<div class="a" style="left:688.9px;top:459.0px;width:99.6px;height:51.7px;background:#abeac8"></div>
<div class="pos" style="left:702.5px;top:467.7px">7</div>
<div class="d du" style="left:718.0px;top:468.0px"><svg width="4.200" height="3" viewBox="0 0 5 4" preserveAspectRatio="none" style="position:relative;top:-1.600px;margin-right:0.900px"><path d="M0 4L2.500 0 5 4z" fill="#1abc9c"/></svg>1</div>
<div class="a" style="left:788.5px;top:459.0px;width:99.6px;height:51.7px;background:#b3edcd"></div>
<div class="pos" style="left:802.1px;top:467.7px">8</div>
<div class="a" style="left:888.1px;top:459.0px;width:99.6px;height:51.7px;background:#b3edcd"></div>
<div class="pos" style="left:901.7px;top:467.7px">8</div>
<div class="a" style="left:987.7px;top:459.0px;width:99.6px;height:51.7px;background:#b3edcd"></div>
<div class="pos" style="left:1001.3px;top:467.7px">8</div>
<svg class="a" style="left:1035.9px;top:484.6px" width="13.6" height="14.4" viewBox="0 0 14 14" preserveAspectRatio="none" fill="#a7b1ab"><circle cx="7" cy="3.800" r="3.600"/><path d="M0 12.500C0 8.500 2 7 4 6.800c.9.800 1.900 1.200 3 1.200s2.100-.4 3-1.200c2 .2 4 1.700 4 5.700 0 .9-.6 1.500-1.500 1.500h-11C.6 14 0 13.400 0 12.500z"/></svg>
<div class="vn" style="left:1052.5px;top:483.5px">1</div>
<div class="a" style="left:1087.3px;top:459.0px;width:99.6px;height:51.7px;background:#b3edcd"></div>
<div class="pos" style="left:1100.9px;top:467.7px">8</div>
<div class="d dd" style="left:1116.4px;top:468.0px"><svg width="4.200" height="3" viewBox="0 0 5 4" preserveAspectRatio="none" style="position:relative;top:-1.600px;margin-right:0.900px"><path d="M0 0L2.500 4 5 0z" fill="#e62a1a"/></svg>1</div>
<div class="a" style="left:1186.9px;top:459.0px;width:99.6px;height:51.7px;background:#abeac8"></div>
<div class="pos" style="left:1200.5px;top:467.7px">7</div>
<div class="a" style="left:1286.5px;top:459.0px;width:99.6px;height:51.7px;background:#abeac8"></div>
<div class="pos" style="left:1300.1px;top:467.7px">7</div>
<div class="d dd" style="left:1315.6px;top:468.0px"><svg width="4.200" height="3" viewBox="0 0 5 4" preserveAspectRatio="none" style="position:relative;top:-1.600px;margin-right:0.900px"><path d="M0 0L2.500 4 5 0z" fill="#e62a1a"/></svg>1</div>
<div class="a" style="left:1386.1px;top:459.0px;width:99.6px;height:51.7px;background:#a2e8c2"></div>
<div class="pos" style="left:1399.7px;top:467.7px">6</div>
<svg class="a" style="left:1434.3px;top:484.6px" width="13.6" height="14.4" viewBox="0 0 14 14" preserveAspectRatio="none" fill="#a7b1ab"><circle cx="7" cy="3.800" r="3.600"/><path d="M0 12.500C0 8.500 2 7 4 6.800c.9.800 1.900 1.200 3 1.200s2.100-.4 3-1.200c2 .2 4 1.700 4 5.700 0 .9-.6 1.500-1.500 1.500h-11C.6 14 0 13.400 0 12.500z"/></svg>
<div class="vn" style="left:1450.9px;top:483.5px">1</div>
<div class="a" style="left:1485.7px;top:459.0px;width:97.8px;height:51.7px;background:#a2e8c2"></div>
<div class="pos" style="left:1499.3px;top:467.7px">6</div>
<div class="d du" style="left:1514.8px;top:468.0px"><svg width="4.200" height="3" viewBox="0 0 5 4" preserveAspectRatio="none" style="position:relative;top:-1.600px;margin-right:0.900px"><path d="M0 4L2.500 0 5 4z" fill="#1abc9c"/></svg>1</div>
<svg class="a" style="left:1533.9px;top:484.6px" width="13.6" height="14.4" viewBox="0 0 14 14" preserveAspectRatio="none" fill="#a7b1ab"><circle cx="7" cy="3.800" r="3.600"/><path d="M0 12.500C0 8.500 2 7 4 6.800c.9.800 1.900 1.200 3 1.200s2.100-.4 3-1.200c2 .2 4 1.700 4 5.700 0 .9-.6 1.500-1.500 1.500h-11C.6 14 0 13.400 0 12.500z"/></svg>
<div class="vn" style="left:1550.5px;top:483.5px">2</div>
<div class="dash" style="top:535.7px"></div>
<div class="kw" style="top:528.5px">проверить позиции сайта</div>
<div class="num" style="left:423px;width:89px;top:528.5px">1502</div>
<div class="num" style="left:513px;width:76px;top:528.5px">28</div>
<div class="a" style="left:589.3px;top:510.6px;width:99.6px;height:51.7px;background:#99e5bc"></div>
<div class="pos" style="left:602.9px;top:519.3px">5</div>
<div class="d du" style="left:618.4px;top:519.6px"><svg width="4.200" height="3" viewBox="0 0 5 4" preserveAspectRatio="none" style="position:relative;top:-1.600px;margin-right:0.900px"><path d="M0 4L2.500 0 5 4z" fill="#1abc9c"/></svg>2</div>
<svg class="a" style="left:637.5px;top:536.2px" width="13.6" height="14.4" viewBox="0 0 14 14" preserveAspectRatio="none" fill="#a7b1ab"><circle cx="7" cy="3.800" r="3.600"/><path d="M0 12.500C0 8.500 2 7 4 6.800c.9.800 1.900 1.200 3 1.200s2.100-.4 3-1.200c2 .2 4 1.700 4 5.700 0 .9-.6 1.500-1.500 1.500h-11C.6 14 0 13.400 0 12.500z"/></svg>
<div class="vn" style="left:654.1px;top:535.1px">2</div>
<div class="a" style="left:688.9px;top:510.6px;width:99.6px;height:51.7px;background:#abeac8"></div>
<div class="pos" style="left:702.5px;top:519.3px">7</div>
<svg class="a" style="left:737.1px;top:536.2px" width="13.6" height="14.4" viewBox="0 0 14 14" preserveAspectRatio="none" fill="#a7b1ab"><circle cx="7" cy="3.800" r="3.600"/><path d="M0 12.500C0 8.500 2 7 4 6.800c.9.800 1.900 1.200 3 1.200s2.100-.4 3-1.200c2 .2 4 1.700 4 5.700 0 .9-.6 1.500-1.500 1.500h-11C.6 14 0 13.400 0 12.500z"/></svg>
<div class="vn" style="left:753.7px;top:535.1px">1</div>
<div class="a" style="left:788.5px;top:510.6px;width:99.6px;height:51.7px;background:#abeac8"></div>
<div class="pos" style="left:802.1px;top:519.3px">7</div>
<div class="d dd" style="left:817.6px;top:519.6px"><svg width="4.200" height="3" viewBox="0 0 5 4" preserveAspectRatio="none" style="position:relative;top:-1.600px;margin-right:0.900px"><path d="M0 0L2.500 4 5 0z" fill="#e62a1a"/></svg>1</div>
<svg class="a" style="left:836.7px;top:536.2px" width="13.6" height="14.4" viewBox="0 0 14 14" preserveAspectRatio="none" fill="#a7b1ab"><circle cx="7" cy="3.800" r="3.600"/><path d="M0 12.500C0 8.500 2 7 4 6.800c.9.800 1.900 1.200 3 1.200s2.100-.4 3-1.200c2 .2 4 1.700 4 5.700 0 .9-.6 1.500-1.500 1.500h-11C.6 14 0 13.400 0 12.500z"/></svg>
<div class="vn" style="left:853.3px;top:535.1px">3</div>
<div class="a" style="left:888.1px;top:510.6px;width:99.6px;height:51.7px;background:#a2e8c2"></div>
<div class="pos" style="left:901.7px;top:519.3px">6</div>
<svg class="a" style="left:936.3px;top:536.2px" width="13.6" height="14.4" viewBox="0 0 14 14" preserveAspectRatio="none" fill="#a7b1ab"><circle cx="7" cy="3.800" r="3.600"/><path d="M0 12.500C0 8.500 2 7 4 6.800c.9.800 1.900 1.200 3 1.200s2.100-.4 3-1.200c2 .2 4 1.700 4 5.700 0 .9-.6 1.500-1.500 1.500h-11C.6 14 0 13.400 0 12.500z"/></svg>
<div class="vn" style="left:952.9px;top:535.1px">1</div>
<div class="a" style="left:987.7px;top:510.6px;width:99.6px;height:51.7px;background:#a2e8c2"></div>
<div class="pos" style="left:1001.3px;top:519.3px">6</div>
<svg class="a" style="left:1035.9px;top:536.2px" width="13.6" height="14.4" viewBox="0 0 14 14" preserveAspectRatio="none" fill="#a7b1ab"><circle cx="7" cy="3.800" r="3.600"/><path d="M0 12.500C0 8.500 2 7 4 6.800c.9.800 1.900 1.200 3 1.200s2.100-.4 3-1.200c2 .2 4 1.700 4 5.700 0 .9-.6 1.500-1.500 1.500h-11C.6 14 0 13.400 0 12.500z"/></svg>
<div class="vn" style="left:1052.5px;top:535.1px">1</div>
<div class="a" style="left:1087.3px;top:510.6px;width:99.6px;height:51.7px;background:#a2e8c2"></div>
<div class="pos" style="left:1100.9px;top:519.3px">6</div>
<div class="d dd" style="left:1116.4px;top:519.6px"><svg width="4.200" height="3" viewBox="0 0 5 4" preserveAspectRatio="none" style="position:relative;top:-1.600px;margin-right:0.900px"><path d="M0 0L2.500 4 5 0z" fill="#e62a1a"/></svg>2</div>
<svg class="a" style="left:1135.5px;top:536.2px" width="13.6" height="14.4" viewBox="0 0 14 14" preserveAspectRatio="none" fill="#a7b1ab"><circle cx="7" cy="3.800" r="3.600"/><path d="M0 12.500C0 8.500 2 7 4 6.800c.9.800 1.900 1.200 3 1.200s2.100-.4 3-1.200c2 .2 4 1.700 4 5.700 0 .9-.6 1.500-1.500 1.500h-11C.6 14 0 13.400 0 12.500z"/></svg>
<div class="vn" style="left:1152.1px;top:535.1px">2</div>
<div class="a" style="left:1186.9px;top:510.6px;width:99.6px;height:51.7px;background:#90e3b6"></div>
<div class="pos" style="left:1200.5px;top:519.3px">4</div>
<div class="d du" style="left:1216.0px;top:519.6px"><svg width="4.200" height="3" viewBox="0 0 5 4" preserveAspectRatio="none" style="position:relative;top:-1.600px;margin-right:0.900px"><path d="M0 4L2.500 0 5 4z" fill="#1abc9c"/></svg>3</div>
<svg class="a" style="left:1235.1px;top:536.2px" width="13.6" height="14.4" viewBox="0 0 14 14" preserveAspectRatio="none" fill="#a7b1ab"><circle cx="7" cy="3.800" r="3.600"/><path d="M0 12.500C0 8.500 2 7 4 6.800c.9.800 1.900 1.200 3 1.200s2.100-.4 3-1.200c2 .2 4 1.700 4 5.700 0 .9-.6 1.500-1.500 1.500h-11C.6 14 0 13.400 0 12.500z"/></svg>
<div class="vn" style="left:1251.7px;top:535.1px">1</div>
<div class="a" style="left:1286.5px;top:510.6px;width:99.6px;height:51.7px;background:#abeac8"></div>
<div class="pos" style="left:1300.1px;top:519.3px">7</div>
<div class="d dd" style="left:1315.6px;top:519.6px"><svg width="4.200" height="3" viewBox="0 0 5 4" preserveAspectRatio="none" style="position:relative;top:-1.600px;margin-right:0.900px"><path d="M0 0L2.500 4 5 0z" fill="#e62a1a"/></svg>3</div>
<div class="a" style="left:1386.1px;top:510.6px;width:99.6px;height:51.7px;background:#90e3b6"></div>
<div class="pos" style="left:1399.7px;top:519.3px">4</div>
<div class="d du" style="left:1415.2px;top:519.6px"><svg width="4.200" height="3" viewBox="0 0 5 4" preserveAspectRatio="none" style="position:relative;top:-1.600px;margin-right:0.900px"><path d="M0 4L2.500 0 5 4z" fill="#1abc9c"/></svg>1</div>
<div class="a" style="left:1485.7px;top:510.6px;width:97.8px;height:51.7px;background:#99e5bc"></div>
<div class="pos" style="left:1499.3px;top:519.3px">5</div>
<div class="d du" style="left:1514.8px;top:519.6px"><svg width="4.200" height="3" viewBox="0 0 5 4" preserveAspectRatio="none" style="position:relative;top:-1.600px;margin-right:0.900px"><path d="M0 4L2.500 0 5 4z" fill="#1abc9c"/></svg>2</div>
<svg class="a" style="left:1533.9px;top:536.2px" width="13.6" height="14.4" viewBox="0 0 14 14" preserveAspectRatio="none" fill="#a7b1ab"><circle cx="7" cy="3.800" r="3.600"/><path d="M0 12.500C0 8.500 2 7 4 6.800c.9.800 1.900 1.200 3 1.200s2.100-.4 3-1.200c2 .2 4 1.700 4 5.700 0 .9-.6 1.500-1.500 1.500h-11C.6 14 0 13.400 0 12.500z"/></svg>
<div class="vn" style="left:1550.5px;top:535.1px">2</div>
<div class="dash" style="top:587.3px"></div>
<div class="kw" style="top:580.1px">проверка позиций сайта</div>
<div class="num" style="left:423px;width:89px;top:580.1px">1397</div>
<div class="num" style="left:513px;width:76px;top:580.1px">43</div>
<div class="a" style="left:589.3px;top:562.3px;width:99.6px;height:51.7px;background:#90e3b6"></div>
<div class="pos" style="left:602.9px;top:571.0px">4</div>
<svg class="a" style="left:637.5px;top:587.9px" width="13.6" height="14.4" viewBox="0 0 14 14" preserveAspectRatio="none" fill="#a7b1ab"><circle cx="7" cy="3.800" r="3.600"/><path d="M0 12.500C0 8.500 2 7 4 6.800c.9.800 1.900 1.200 3 1.200s2.100-.4 3-1.200c2 .2 4 1.700 4 5.700 0 .9-.6 1.500-1.500 1.500h-11C.6 14 0 13.400 0 12.500z"/></svg>
<div class="vn" style="left:654.1px;top:586.8px">3</div>
<div class="a" style="left:688.9px;top:562.3px;width:99.6px;height:51.7px;background:#90e3b6"></div>
<div class="pos" style="left:702.5px;top:571.0px">4</div>
<div class="d du" style="left:718.0px;top:571.3px"><svg width="4.200" height="3" viewBox="0 0 5 4" preserveAspectRatio="none" style="position:relative;top:-1.600px;margin-right:0.900px"><path d="M0 4L2.500 0 5 4z" fill="#1abc9c"/></svg>1</div>
<svg class="a" style="left:737.1px;top:587.9px" width="13.6" height="14.4" viewBox="0 0 14 14" preserveAspectRatio="none" fill="#a7b1ab"><circle cx="7" cy="3.800" r="3.600"/><path d="M0 12.500C0 8.500 2 7 4 6.800c.9.800 1.900 1.200 3 1.200s2.100-.4 3-1.200c2 .2 4 1.700 4 5.700 0 .9-.6 1.500-1.500 1.500h-11C.6 14 0 13.400 0 12.500z"/></svg>
<div class="vn" style="left:753.7px;top:586.8px">3</div>
<div class="a" style="left:788.5px;top:562.3px;width:99.6px;height:51.7px;background:#99e5bc"></div>
<div class="pos" style="left:802.1px;top:571.0px">5</div>
<div class="d dd" style="left:817.6px;top:571.3px"><svg width="4.200" height="3" viewBox="0 0 5 4" preserveAspectRatio="none" style="position:relative;top:-1.600px;margin-right:0.900px"><path d="M0 0L2.500 4 5 0z" fill="#e62a1a"/></svg>1</div>
<svg class="a" style="left:836.7px;top:587.9px" width="13.6" height="14.4" viewBox="0 0 14 14" preserveAspectRatio="none" fill="#a7b1ab"><circle cx="7" cy="3.800" r="3.600"/><path d="M0 12.500C0 8.500 2 7 4 6.800c.9.800 1.900 1.200 3 1.200s2.100-.4 3-1.200c2 .2 4 1.700 4 5.700 0 .9-.6 1.500-1.500 1.500h-11C.6 14 0 13.400 0 12.500z"/></svg>
<div class="vn" style="left:853.3px;top:586.8px">2</div>
<div class="a" style="left:888.1px;top:562.3px;width:99.6px;height:51.7px;background:#90e3b6"></div>
<div class="pos" style="left:901.7px;top:571.0px">4</div>
<svg class="a" style="left:936.3px;top:587.9px" width="13.6" height="14.4" viewBox="0 0 14 14" preserveAspectRatio="none" fill="#a7b1ab"><circle cx="7" cy="3.800" r="3.600"/><path d="M0 12.500C0 8.500 2 7 4 6.800c.9.800 1.900 1.200 3 1.200s2.100-.4 3-1.200c2 .2 4 1.700 4 5.700 0 .9-.6 1.500-1.500 1.500h-11C.6 14 0 13.400 0 12.500z"/></svg>
<div class="vn" style="left:952.9px;top:586.8px">1</div>
<div class="a" style="left:987.7px;top:562.3px;width:99.6px;height:51.7px;background:#90e3b6"></div>
<div class="pos" style="left:1001.3px;top:571.0px">4</div>
<svg class="a" style="left:1035.9px;top:587.9px" width="13.6" height="14.4" viewBox="0 0 14 14" preserveAspectRatio="none" fill="#a7b1ab"><circle cx="7" cy="3.800" r="3.600"/><path d="M0 12.500C0 8.500 2 7 4 6.800c.9.800 1.900 1.200 3 1.200s2.100-.4 3-1.200c2 .2 4 1.700 4 5.700 0 .9-.6 1.500-1.500 1.500h-11C.6 14 0 13.400 0 12.500z"/></svg>
<div class="vn" style="left:1052.5px;top:586.8px">1</div>
<div class="a" style="left:1087.3px;top:562.3px;width:99.6px;height:51.7px;background:#90e3b6"></div>
<div class="pos" style="left:1100.9px;top:571.0px">4</div>
<svg class="a" style="left:1135.5px;top:587.9px" width="13.6" height="14.4" viewBox="0 0 14 14" preserveAspectRatio="none" fill="#a7b1ab"><circle cx="7" cy="3.800" r="3.600"/><path d="M0 12.500C0 8.500 2 7 4 6.800c.9.800 1.900 1.200 3 1.200s2.100-.4 3-1.200c2 .2 4 1.700 4 5.700 0 .9-.6 1.500-1.500 1.500h-11C.6 14 0 13.400 0 12.500z"/></svg>
<div class="vn" style="left:1152.1px;top:586.8px">1</div>
<div class="a" style="left:1186.9px;top:562.3px;width:99.6px;height:51.7px;background:#90e3b6"></div>
<div class="pos" style="left:1200.5px;top:571.0px">4</div>
<svg class="a" style="left:1235.1px;top:587.9px" width="13.6" height="14.4" viewBox="0 0 14 14" preserveAspectRatio="none" fill="#a7b1ab"><circle cx="7" cy="3.800" r="3.600"/><path d="M0 12.500C0 8.500 2 7 4 6.800c.9.800 1.900 1.200 3 1.200s2.100-.4 3-1.200c2 .2 4 1.700 4 5.700 0 .9-.6 1.500-1.500 1.500h-11C.6 14 0 13.400 0 12.500z"/></svg>
<div class="vn" style="left:1251.7px;top:586.8px">1</div>
<div class="a" style="left:1286.5px;top:562.3px;width:99.6px;height:51.7px;background:#90e3b6"></div>
<div class="pos" style="left:1300.1px;top:571.0px">4</div>
<svg class="a" style="left:1334.7px;top:587.9px" width="13.6" height="14.4" viewBox="0 0 14 14" preserveAspectRatio="none" fill="#a7b1ab"><circle cx="7" cy="3.800" r="3.600"/><path d="M0 12.500C0 8.500 2 7 4 6.800c.9.800 1.900 1.200 3 1.200s2.100-.4 3-1.200c2 .2 4 1.700 4 5.700 0 .9-.6 1.500-1.500 1.500h-11C.6 14 0 13.400 0 12.500z"/></svg>
<div class="vn" style="left:1351.3px;top:586.8px">1</div>
<div class="a" style="left:1386.1px;top:562.3px;width:99.6px;height:51.7px;background:#90e3b6"></div>
<div class="pos" style="left:1399.7px;top:571.0px">4</div>
<svg class="a" style="left:1434.3px;top:587.9px" width="13.6" height="14.4" viewBox="0 0 14 14" preserveAspectRatio="none" fill="#a7b1ab"><circle cx="7" cy="3.800" r="3.600"/><path d="M0 12.500C0 8.500 2 7 4 6.800c.9.800 1.900 1.200 3 1.200s2.100-.4 3-1.200c2 .2 4 1.700 4 5.700 0 .9-.6 1.500-1.500 1.500h-11C.6 14 0 13.400 0 12.500z"/></svg>
<div class="vn" style="left:1450.9px;top:586.8px">4</div>
<div class="a" style="left:1485.7px;top:562.3px;width:97.8px;height:51.7px;background:#90e3b6"></div>
<div class="pos" style="left:1499.3px;top:571.0px">4</div>
<div class="d du" style="left:1514.8px;top:571.3px"><svg width="4.200" height="3" viewBox="0 0 5 4" preserveAspectRatio="none" style="position:relative;top:-1.600px;margin-right:0.900px"><path d="M0 4L2.500 0 5 4z" fill="#1abc9c"/></svg>2</div>
<svg class="a" style="left:1533.9px;top:587.9px" width="13.6" height="14.4" viewBox="0 0 14 14" preserveAspectRatio="none" fill="#a7b1ab"><circle cx="7" cy="3.800" r="3.600"/><path d="M0 12.500C0 8.500 2 7 4 6.800c.9.800 1.900 1.200 3 1.200s2.100-.4 3-1.200c2 .2 4 1.700 4 5.700 0 .9-.6 1.500-1.500 1.500h-11C.6 14 0 13.400 0 12.500z"/></svg>
<div class="vn" style="left:1550.5px;top:586.8px">1</div>
<div class="dash" style="top:639.0px"></div>
<div class="kw" style="top:624.3px">проверка позиций сайта в<br>поисковиках</div>
<div class="num" style="left:423px;width:89px;top:631.8px">179</div>
<div class="num" style="left:513px;width:76px;top:631.8px">0</div>
<div class="a" style="left:589.3px;top:614.0px;width:99.6px;height:51.7px;background:#abeac8"></div>
<div class="pos" style="left:602.9px;top:622.7px">7</div>
<div class="d dd" style="left:618.4px;top:623.0px"><svg width="4.200" height="3" viewBox="0 0 5 4" preserveAspectRatio="none" style="position:relative;top:-1.600px;margin-right:0.900px"><path d="M0 0L2.500 4 5 0z" fill="#e62a1a"/></svg>1</div>
<div class="a" style="left:688.9px;top:614.0px;width:99.6px;height:51.7px;background:#a2e8c2"></div>
<div class="pos" style="left:702.5px;top:622.7px">6</div>
<div class="d du" style="left:718.0px;top:623.0px"><svg width="4.200" height="3" viewBox="0 0 5 4" preserveAspectRatio="none" style="position:relative;top:-1.600px;margin-right:0.900px"><path d="M0 4L2.500 0 5 4z" fill="#1abc9c"/></svg>1</div>
<div class="a" style="left:788.5px;top:614.0px;width:99.6px;height:51.7px;background:#abeac8"></div>
<div class="pos" style="left:802.1px;top:622.7px">7</div>
<div class="d dd" style="left:817.6px;top:623.0px"><svg width="4.200" height="3" viewBox="0 0 5 4" preserveAspectRatio="none" style="position:relative;top:-1.600px;margin-right:0.900px"><path d="M0 0L2.500 4 5 0z" fill="#e62a1a"/></svg>2</div>
<div class="a" style="left:888.1px;top:614.0px;width:99.6px;height:51.7px;background:#99e5bc"></div>
<div class="pos" style="left:901.7px;top:622.7px">5</div>
<div class="d du" style="left:917.2px;top:623.0px"><svg width="4.200" height="3" viewBox="0 0 5 4" preserveAspectRatio="none" style="position:relative;top:-1.600px;margin-right:0.900px"><path d="M0 4L2.500 0 5 4z" fill="#1abc9c"/></svg>1</div>
<div class="a" style="left:987.7px;top:614.0px;width:99.6px;height:51.7px;background:#a2e8c2"></div>
<div class="pos" style="left:1001.3px;top:622.7px">6</div>
<div class="d dd" style="left:1016.8px;top:623.0px"><svg width="4.200" height="3" viewBox="0 0 5 4" preserveAspectRatio="none" style="position:relative;top:-1.600px;margin-right:0.900px"><path d="M0 0L2.500 4 5 0z" fill="#e62a1a"/></svg>1</div>
<div class="a" style="left:1087.3px;top:614.0px;width:99.6px;height:51.7px;background:#99e5bc"></div>
<div class="pos" style="left:1100.9px;top:622.7px">5</div>
<div class="a" style="left:1186.9px;top:614.0px;width:99.6px;height:51.7px;background:#99e5bc"></div>
<div class="pos" style="left:1200.5px;top:622.7px">5</div>
<div class="d du" style="left:1216.0px;top:623.0px"><svg width="4.200" height="3" viewBox="0 0 5 4" preserveAspectRatio="none" style="position:relative;top:-1.600px;margin-right:0.900px"><path d="M0 4L2.500 0 5 4z" fill="#1abc9c"/></svg>2</div>
<div class="a" style="left:1286.5px;top:614.0px;width:99.6px;height:51.7px;background:#abeac8"></div>
<div class="pos" style="left:1300.1px;top:622.7px">7</div>
<div class="d dd" style="left:1315.6px;top:623.0px"><svg width="4.200" height="3" viewBox="0 0 5 4" preserveAspectRatio="none" style="position:relative;top:-1.600px;margin-right:0.900px"><path d="M0 0L2.500 4 5 0z" fill="#e62a1a"/></svg>1</div>
<div class="a" style="left:1386.1px;top:614.0px;width:99.6px;height:51.7px;background:#a2e8c2"></div>
<div class="pos" style="left:1399.7px;top:622.7px">6</div>
<div class="a" style="left:1485.7px;top:614.0px;width:97.8px;height:51.7px;background:#a2e8c2"></div>
<div class="pos" style="left:1499.3px;top:622.7px">6</div>
<div class="d du" style="left:1514.8px;top:623.0px"><svg width="4.200" height="3" viewBox="0 0 5 4" preserveAspectRatio="none" style="position:relative;top:-1.600px;margin-right:0.900px"><path d="M0 4L2.500 0 5 4z" fill="#1abc9c"/></svg>2</div>
<div class="dash" style="top:690.7px"></div>
<div class="kw" style="top:683.5px">проверить позиции</div>
<div class="num" style="left:423px;width:89px;top:683.5px">99</div>
<div class="num" style="left:513px;width:76px;top:683.5px">2</div>
<div class="a" style="left:589.3px;top:665.7px;width:99.6px;height:51.7px;background:#a2e8c2"></div>
<div class="pos" style="left:602.9px;top:674.4px">6</div>
<div class="a" style="left:688.9px;top:665.7px;width:99.6px;height:51.7px;background:#a2e8c2"></div>
<div class="pos" style="left:702.5px;top:674.4px">6</div>
<div class="d du" style="left:718.0px;top:674.7px"><svg width="4.200" height="3" viewBox="0 0 5 4" preserveAspectRatio="none" style="position:relative;top:-1.600px;margin-right:0.900px"><path d="M0 4L2.500 0 5 4z" fill="#1abc9c"/></svg>2</div>
<div class="a" style="left:788.5px;top:665.7px;width:99.6px;height:51.7px;background:#b3edcd"></div>
<div class="pos" style="left:802.1px;top:674.4px">8</div>
<div class="a" style="left:888.1px;top:665.7px;width:99.6px;height:51.7px;background:#b3edcd"></div>
<div class="pos" style="left:901.7px;top:674.4px">8</div>
<div class="a" style="left:987.7px;top:665.7px;width:99.6px;height:51.7px;background:#b3edcd"></div>
<div class="pos" style="left:1001.3px;top:674.4px">8</div>
<div class="d dd" style="left:1016.8px;top:674.7px"><svg width="4.200" height="3" viewBox="0 0 5 4" preserveAspectRatio="none" style="position:relative;top:-1.600px;margin-right:0.900px"><path d="M0 0L2.500 4 5 0z" fill="#e62a1a"/></svg>1</div>
<div class="a" style="left:1087.3px;top:665.7px;width:99.6px;height:51.7px;background:#abeac8"></div>
<div class="pos" style="left:1100.9px;top:674.4px">7</div>
<div class="d dd" style="left:1116.4px;top:674.7px"><svg width="4.200" height="3" viewBox="0 0 5 4" preserveAspectRatio="none" style="position:relative;top:-1.600px;margin-right:0.900px"><path d="M0 0L2.500 4 5 0z" fill="#e62a1a"/></svg>1</div>
<div class="a" style="left:1186.9px;top:665.7px;width:99.6px;height:51.7px;background:#a2e8c2"></div>
<div class="pos" style="left:1200.5px;top:674.4px">6</div>
<div class="d du" style="left:1216.0px;top:674.7px"><svg width="4.200" height="3" viewBox="0 0 5 4" preserveAspectRatio="none" style="position:relative;top:-1.600px;margin-right:0.900px"><path d="M0 4L2.500 0 5 4z" fill="#1abc9c"/></svg>1</div>
<div class="a" style="left:1286.5px;top:665.7px;width:99.6px;height:51.7px;background:#abeac8"></div>
<div class="pos" style="left:1300.1px;top:674.4px">7</div>
<div class="a" style="left:1386.1px;top:665.7px;width:99.6px;height:51.7px;background:#abeac8"></div>
<div class="pos" style="left:1399.7px;top:674.4px">7</div>
<div class="d dd" style="left:1415.2px;top:674.7px"><svg width="4.200" height="3" viewBox="0 0 5 4" preserveAspectRatio="none" style="position:relative;top:-1.600px;margin-right:0.900px"><path d="M0 0L2.500 4 5 0z" fill="#e62a1a"/></svg>2</div>
<div class="a" style="left:1485.7px;top:665.7px;width:97.8px;height:51.7px;background:#99e5bc"></div>
<div class="pos" style="left:1499.3px;top:674.4px">5</div>
<div class="d du" style="left:1514.8px;top:674.7px"><svg width="4.200" height="3" viewBox="0 0 5 4" preserveAspectRatio="none" style="position:relative;top:-1.600px;margin-right:0.900px"><path d="M0 4L2.500 0 5 4z" fill="#1abc9c"/></svg>1</div>
<div class="dash" style="top:742.4px"></div>
<div class="kw" style="top:727.7px">проверить позиции сайта по<br>ключевым запросам</div>
<div class="num" style="left:423px;width:89px;top:735.2px">23</div>
<div class="num" style="left:513px;width:76px;top:735.2px">8</div>
<div class="a" style="left:589.3px;top:717.3px;width:99.6px;height:51.7px;background:#abeac8"></div>
<div class="pos" style="left:602.9px;top:726.0px">7</div>
<div class="d dd" style="left:618.4px;top:726.3px"><svg width="4.200" height="3" viewBox="0 0 5 4" preserveAspectRatio="none" style="position:relative;top:-1.600px;margin-right:0.900px"><path d="M0 0L2.500 4 5 0z" fill="#e62a1a"/></svg>1</div>
<div class="a" style="left:688.9px;top:717.3px;width:99.6px;height:51.7px;background:#a2e8c2"></div>
<div class="pos" style="left:702.5px;top:726.0px">6</div>
<div class="d du" style="left:718.0px;top:726.3px"><svg width="4.200" height="3" viewBox="0 0 5 4" preserveAspectRatio="none" style="position:relative;top:-1.600px;margin-right:0.900px"><path d="M0 4L2.500 0 5 4z" fill="#1abc9c"/></svg>2</div>
<svg class="a" style="left:737.1px;top:742.9px" width="13.6" height="14.4" viewBox="0 0 14 14" preserveAspectRatio="none" fill="#a7b1ab"><circle cx="7" cy="3.800" r="3.600"/><path d="M0 12.500C0 8.500 2 7 4 6.800c.9.800 1.900 1.200 3 1.200s2.100-.4 3-1.200c2 .2 4 1.700 4 5.700 0 .9-.6 1.500-1.500 1.500h-11C.6 14 0 13.400 0 12.500z"/></svg>
<div class="vn" style="left:753.7px;top:741.8px">2</div>
<div class="a" style="left:788.5px;top:717.3px;width:99.6px;height:51.7px;background:#b3edcd"></div>
<div class="pos" style="left:802.1px;top:726.0px">8</div>
<div class="a" style="left:888.1px;top:717.3px;width:99.6px;height:51.7px;background:#b3edcd"></div>
<div class="pos" style="left:901.7px;top:726.0px">8</div>
<div class="a" style="left:987.7px;top:717.3px;width:99.6px;height:51.7px;background:#b3edcd"></div>
<div class="pos" style="left:1001.3px;top:726.0px">8</div>
<div class="d dd" style="left:1016.8px;top:726.3px"><svg width="4.200" height="3" viewBox="0 0 5 4" preserveAspectRatio="none" style="position:relative;top:-1.600px;margin-right:0.900px"><path d="M0 0L2.500 4 5 0z" fill="#e62a1a"/></svg>1</div>
<div class="a" style="left:1087.3px;top:717.3px;width:99.6px;height:51.7px;background:#abeac8"></div>
<div class="pos" style="left:1100.9px;top:726.0px">7</div>
<div class="a" style="left:1186.9px;top:717.3px;width:99.6px;height:51.7px;background:#abeac8"></div>
<div class="pos" style="left:1200.5px;top:726.0px">7</div>
<div class="d du" style="left:1216.0px;top:726.3px"><svg width="4.200" height="3" viewBox="0 0 5 4" preserveAspectRatio="none" style="position:relative;top:-1.600px;margin-right:0.900px"><path d="M0 4L2.500 0 5 4z" fill="#1abc9c"/></svg>1</div>
<div class="a" style="left:1286.5px;top:717.3px;width:99.6px;height:51.7px;background:#b3edcd"></div>
<div class="pos" style="left:1300.1px;top:726.0px">8</div>
<div class="a" style="left:1386.1px;top:717.3px;width:99.6px;height:51.7px;background:#b3edcd"></div>
<div class="pos" style="left:1399.7px;top:726.0px">8</div>
<div class="d dd" style="left:1415.2px;top:726.3px"><svg width="4.200" height="3" viewBox="0 0 5 4" preserveAspectRatio="none" style="position:relative;top:-1.600px;margin-right:0.900px"><path d="M0 0L2.500 4 5 0z" fill="#e62a1a"/></svg>2</div>
<div class="a" style="left:1485.7px;top:717.3px;width:97.8px;height:51.7px;background:#a2e8c2"></div>
<div class="pos" style="left:1499.3px;top:726.0px">6</div>
<div class="d du" style="left:1514.8px;top:726.3px"><svg width="4.200" height="3" viewBox="0 0 5 4" preserveAspectRatio="none" style="position:relative;top:-1.600px;margin-right:0.900px"><path d="M0 4L2.500 0 5 4z" fill="#1abc9c"/></svg>1</div>
<div class="a" style="left:132px;top:511px;width:13px;height:69px;background:#f9a8a1;z-index:2"></div>
<div class="a" style="left:132px;top:580px;width:13px;height:17.500px;background:#aad1f6;z-index:2"></div>
<div class="a" style="left:132px;top:597.500px;width:13px;height:16.200px;background:#c9e7a3;z-index:2"></div>
<div class="hl" style="left:81px;top:354px;width:1502px"></div>
<div class="hl" style="left:81px;top:405.400px;width:1502px;height:2.700px;background:#c2c2c2"></div>
<div class="hl" style="left:81px;top:458.5px;width:508px"></div>
<div class="hl" style="left:589px;top:458.5px;width:994px;background:rgba(175,182,178,.6)"></div>
<div class="hl" style="left:81px;top:510.1px;width:508px"></div>
<div class="hl" style="left:589px;top:510.1px;width:994px;background:rgba(175,182,178,.6)"></div>
<div class="hl" style="left:81px;top:561.8px;width:508px"></div>
<div class="hl" style="left:589px;top:561.8px;width:994px;background:rgba(175,182,178,.6)"></div>
<div class="hl" style="left:81px;top:613.5px;width:508px"></div>
<div class="hl" style="left:589px;top:613.5px;width:994px;background:rgba(175,182,178,.6)"></div>
<div class="hl" style="left:81px;top:665.2px;width:508px"></div>
<div class="hl" style="left:589px;top:665.2px;width:994px;background:rgba(175,182,178,.6)"></div>
<div class="hl" style="left:81px;top:716.8px;width:508px"></div>
<div class="hl" style="left:589px;top:716.8px;width:994px;background:rgba(175,182,178,.6)"></div>
<div class="vl" style="left:131px;top:355px;height:414px"></div>
<div class="vl" style="left:422px;top:355px;height:414px"></div>
<div class="vl" style="left:512px;top:355px;height:414px"></div>
<div class="vl" style="left:588.8px;top:355px;height:51px"></div>
<div class="vl" style="left:588.8px;top:406px;height:363px;background:rgba(175,182,178,.6)"></div>
<div class="vl" style="left:688.4px;top:355px;height:51px"></div>
<div class="vl" style="left:688.4px;top:406px;height:363px;background:rgba(175,182,178,.6)"></div>
<div class="vl" style="left:788.0px;top:355px;height:51px"></div>
<div class="vl" style="left:788.0px;top:406px;height:363px;background:rgba(175,182,178,.6)"></div>
<div class="vl" style="left:887.6px;top:355px;height:51px"></div>
<div class="vl" style="left:887.6px;top:406px;height:363px;background:rgba(175,182,178,.6)"></div>
<div class="vl" style="left:987.2px;top:355px;height:51px"></div>
<div class="vl" style="left:987.2px;top:406px;height:363px;background:rgba(175,182,178,.6)"></div>
<div class="vl" style="left:1086.8px;top:355px;height:51px"></div>
<div class="vl" style="left:1086.8px;top:406px;height:363px;background:rgba(175,182,178,.6)"></div>
<div class="vl" style="left:1186.4px;top:355px;height:51px"></div>
<div class="vl" style="left:1186.4px;top:406px;height:363px;background:rgba(175,182,178,.6)"></div>
<div class="vl" style="left:1286.0px;top:355px;height:51px"></div>
<div class="vl" style="left:1286.0px;top:406px;height:363px;background:rgba(175,182,178,.6)"></div>
<div class="vl" style="left:1385.6px;top:355px;height:51px"></div>
<div class="vl" style="left:1385.6px;top:406px;height:363px;background:rgba(175,182,178,.6)"></div>
<div class="vl" style="left:1485.2px;top:355px;height:51px"></div>
<div class="vl" style="left:1485.2px;top:406px;height:363px;background:rgba(175,182,178,.6)"></div>
<svg class="a" style="left:96.500px;top:371px" width="19" height="19" viewBox="0 0 24 24" fill="none" stroke="#1c2e4a" stroke-width="2.800" stroke-linecap="round" stroke-linejoin="round"><g transform="translate(24 0) scale(-1 1)"><path d="M10 13a5 5 0 0 0 7.540.540l3-3a5 5 0 0 0-7.070-7.070l-1.720 1.710"/><path d="M14 11a5 5 0 0 0-7.540-.540l-3 3a5 5 0 0 0 7.070 7.070l1.710-1.710"/></g></svg>
<div class="t" style="left:145px;top:368px;font-size:20px;color:#1c2e4a;letter-spacing:0.8px;-webkit-text-stroke:0.45px #1c2e4a">Запросы <span style="font-size:16.500px;letter-spacing:0.3px">(7)</span></div>
<svg class="a" style="left:265.500px;top:369.500px" width="14" height="14" viewBox="0 0 14 14" fill="none" stroke="#aaa" stroke-width="2"><circle cx="5.500" cy="5.500" r="4.200"/><path d="M8.500 8.500l4.500 4.500"/></svg>
<div class="t" style="left:426px;top:359.500px;font-size:15px;color:#222;letter-spacing:0.4px">&quot;[!Частота]&quot;</div>
<div class="a" style="left:426px;top:378px;width:83px;border-top:1px dashed #444"></div>
<svg class="a" style="left:458.5px;top:386.0px;opacity:0.7" width="17.0" height="17.0" viewBox="0 0 22 22"><circle cx="11" cy="11" r="9.900" fill="none" stroke="#c9c9c9" stroke-width="1.500"/><path d="M3.500 6.500c1-1.800 2.800-3.300 4.800-3.900l2 .9-.3 1.800-1.800.6-.4 1.800-1.700.4-.5 1.600-1.500-.4zM7 10.800l2.200-.3 1.800 1.400 1.400 2.200-1.200 2-.6 2.600-1.500.2-.7-2.800-1.300-2.200zM12.500 2.700c2 .3 3.800 1.300 5.200 2.800l-1.200 1-.4 1.600-1.800.8-1-1.300-1.600-.4.300-2.100zM14.200 9.500l2.400-.6 1.600 1 1.300-.2c.2 1.800-.1 3.500-.9 5l-1.700 2.300-1.300-2.500-.3-2.300z" fill="#c9c9c9"/></svg>
<div class="t" style="left:524px;top:372.300px;font-size:15px;color:#222;letter-spacing:0.45px">Визиты</div>
<div class="date" style="left:594.9px">31.05.2018</div>
<svg class="a" style="left:599.6px;top:385.500px" width="18" height="18" viewBox="0 0 18 18"><circle cx="9" cy="9" r="8.800" fill="#a6a6a6"/><text x="9" y="13.200" text-anchor="middle" font-family="Liberation Sans, sans-serif" font-size="11.500" font-weight="bold" fill="#fff">%</text></svg>
<div class="hs" style="left:618.8px;top:380.200px">100</div>
<svg class="a" style="left:644.3px;top:387.0px" width="14.5" height="15.2" viewBox="0 0 14 14" preserveAspectRatio="none" fill="#aaa"><circle cx="7" cy="3.800" r="3.600"/><path d="M0 12.500C0 8.500 2 7 4 6.800c.9.800 1.900 1.200 3 1.200s2.100-.4 3-1.200c2 .2 4 1.700 4 5.700 0 .9-.6 1.500-1.500 1.500h-11C.6 14 0 13.400 0 12.500z"/></svg>
<div class="hs" style="left:658.3px;top:380.200px">7</div>
<svg class="a" style="left:668.3px;top:385px" width="11" height="14" viewBox="0 0 11 14" fill="#d9d9d9"><path d="M0 6L5.500 0 11 6zM0 8l5.500 6L11 8z"/></svg>
<div class="date" style="left:694.5px">30.05.2018</div>
<svg class="a" style="left:699.2px;top:385.500px" width="18" height="18" viewBox="0 0 18 18"><circle cx="9" cy="9" r="8.800" fill="#a6a6a6"/><text x="9" y="13.200" text-anchor="middle" font-family="Liberation Sans, sans-serif" font-size="11.500" font-weight="bold" fill="#fff">%</text></svg>
<div class="hs" style="left:718.4px;top:380.200px">100</div>
<svg class="a" style="left:743.9px;top:387.0px" width="14.5" height="15.2" viewBox="0 0 14 14" preserveAspectRatio="none" fill="#aaa"><circle cx="7" cy="3.800" r="3.600"/><path d="M0 12.500C0 8.500 2 7 4 6.800c.9.800 1.900 1.200 3 1.200s2.100-.4 3-1.200c2 .2 4 1.700 4 5.700 0 .9-.6 1.500-1.500 1.500h-11C.6 14 0 13.400 0 12.500z"/></svg>
<div class="hs" style="left:757.9px;top:380.200px">6</div>
<svg class="a" style="left:767.9px;top:385px" width="11" height="14" viewBox="0 0 11 14" fill="#d9d9d9"><path d="M0 6L5.500 0 11 6zM0 8l5.500 6L11 8z"/></svg>
<div class="date" style="left:794.1px">29.05.2018</div>
<svg class="a" style="left:798.8px;top:385.500px" width="18" height="18" viewBox="0 0 18 18"><circle cx="9" cy="9" r="8.800" fill="#a6a6a6"/><text x="9" y="13.200" text-anchor="middle" font-family="Liberation Sans, sans-serif" font-size="11.500" font-weight="bold" fill="#fff">%</text></svg>
<div class="hs" style="left:818.0px;top:380.200px">100</div>
<svg class="a" style="left:843.5px;top:387.0px" width="14.5" height="15.2" viewBox="0 0 14 14" preserveAspectRatio="none" fill="#aaa"><circle cx="7" cy="3.800" r="3.600"/><path d="M0 12.500C0 8.500 2 7 4 6.800c.9.800 1.900 1.200 3 1.200s2.100-.4 3-1.200c2 .2 4 1.700 4 5.700 0 .9-.6 1.500-1.500 1.500h-11C.6 14 0 13.400 0 12.500z"/></svg>
<div class="hs" style="left:857.5px;top:380.200px">5</div>
<svg class="a" style="left:867.5px;top:385px" width="11" height="14" viewBox="0 0 11 14" fill="#d9d9d9"><path d="M0 6L5.500 0 11 6zM0 8l5.500 6L11 8z"/></svg>
<div class="date" style="left:893.7px">28.05.2018</div>
<svg class="a" style="left:898.4px;top:385.500px" width="18" height="18" viewBox="0 0 18 18"><circle cx="9" cy="9" r="8.800" fill="#a6a6a6"/><text x="9" y="13.200" text-anchor="middle" font-family="Liberation Sans, sans-serif" font-size="11.500" font-weight="bold" fill="#fff">%</text></svg>
<div class="hs" style="left:917.6px;top:380.200px">100</div>
<svg class="a" style="left:943.1px;top:387.0px" width="14.5" height="15.2" viewBox="0 0 14 14" preserveAspectRatio="none" fill="#aaa"><circle cx="7" cy="3.800" r="3.600"/><path d="M0 12.500C0 8.500 2 7 4 6.800c.9.800 1.900 1.200 3 1.200s2.100-.4 3-1.200c2 .2 4 1.700 4 5.700 0 .9-.6 1.500-1.500 1.500h-11C.6 14 0 13.400 0 12.500z"/></svg>
<div class="hs" style="left:957.1px;top:380.200px">2</div>
<svg class="a" style="left:967.1px;top:385px" width="11" height="14" viewBox="0 0 11 14" fill="#d9d9d9"><path d="M0 6L5.500 0 11 6zM0 8l5.500 6L11 8z"/></svg>
<div class="date" style="left:993.3px">27.05.2018</div>
<svg class="a" style="left:998.0px;top:385.500px" width="18" height="18" viewBox="0 0 18 18"><circle cx="9" cy="9" r="8.800" fill="#a6a6a6"/><text x="9" y="13.200" text-anchor="middle" font-family="Liberation Sans, sans-serif" font-size="11.500" font-weight="bold" fill="#fff">%</text></svg>
<div class="hs" style="left:1017.2px;top:380.200px">100</div>
<svg class="a" style="left:1042.7px;top:387.0px" width="14.5" height="15.2" viewBox="0 0 14 14" preserveAspectRatio="none" fill="#aaa"><circle cx="7" cy="3.800" r="3.600"/><path d="M0 12.500C0 8.500 2 7 4 6.800c.9.800 1.900 1.200 3 1.200s2.100-.4 3-1.200c2 .2 4 1.700 4 5.700 0 .9-.6 1.500-1.500 1.500h-11C.6 14 0 13.400 0 12.500z"/></svg>
<div class="hs" style="left:1056.7px;top:380.200px">3</div>
<svg class="a" style="left:1066.7px;top:385px" width="11" height="14" viewBox="0 0 11 14" fill="#d9d9d9"><path d="M0 6L5.500 0 11 6zM0 8l5.500 6L11 8z"/></svg>
<div class="date" style="left:1092.9px">26.05.2018</div>
<svg class="a" style="left:1097.6px;top:385.500px" width="18" height="18" viewBox="0 0 18 18"><circle cx="9" cy="9" r="8.800" fill="#a6a6a6"/><text x="9" y="13.200" text-anchor="middle" font-family="Liberation Sans, sans-serif" font-size="11.500" font-weight="bold" fill="#fff">%</text></svg>
<div class="hs" style="left:1116.8px;top:380.200px">100</div>
<svg class="a" style="left:1142.3px;top:387.0px" width="14.5" height="15.2" viewBox="0 0 14 14" preserveAspectRatio="none" fill="#aaa"><circle cx="7" cy="3.800" r="3.600"/><path d="M0 12.500C0 8.500 2 7 4 6.800c.9.800 1.900 1.200 3 1.200s2.100-.4 3-1.200c2 .2 4 1.700 4 5.700 0 .9-.6 1.500-1.500 1.500h-11C.6 14 0 13.400 0 12.500z"/></svg>
<div class="hs" style="left:1156.3px;top:380.200px">3</div>
<svg class="a" style="left:1166.3px;top:385px" width="11" height="14" viewBox="0 0 11 14" fill="#d9d9d9"><path d="M0 6L5.500 0 11 6zM0 8l5.500 6L11 8z"/></svg>
<div class="date" style="left:1192.5px">25.05.2018</div>
<svg class="a" style="left:1197.2px;top:385.500px" width="18" height="18" viewBox="0 0 18 18"><circle cx="9" cy="9" r="8.800" fill="#a6a6a6"/><text x="9" y="13.200" text-anchor="middle" font-family="Liberation Sans, sans-serif" font-size="11.500" font-weight="bold" fill="#fff">%</text></svg>
<div class="hs" style="left:1216.4px;top:380.200px">100</div>
<svg class="a" style="left:1241.9px;top:387.0px" width="14.5" height="15.2" viewBox="0 0 14 14" preserveAspectRatio="none" fill="#aaa"><circle cx="7" cy="3.800" r="3.600"/><path d="M0 12.500C0 8.500 2 7 4 6.800c.9.800 1.900 1.200 3 1.200s2.100-.4 3-1.200c2 .2 4 1.700 4 5.700 0 .9-.6 1.500-1.500 1.500h-11C.6 14 0 13.400 0 12.500z"/></svg>
<div class="hs" style="left:1255.9px;top:380.200px">2</div>
<svg class="a" style="left:1265.9px;top:385px" width="11" height="14" viewBox="0 0 11 14" fill="#d9d9d9"><path d="M0 6L5.500 0 11 6zM0 8l5.500 6L11 8z"/></svg>
<div class="date" style="left:1292.1px">24.05.2018</div>
<svg class="a" style="left:1296.8px;top:385.500px" width="18" height="18" viewBox="0 0 18 18"><circle cx="9" cy="9" r="8.800" fill="#a6a6a6"/><text x="9" y="13.200" text-anchor="middle" font-family="Liberation Sans, sans-serif" font-size="11.500" font-weight="bold" fill="#fff">%</text></svg>
<div class="hs" style="left:1316.0px;top:380.200px">100</div>
<svg class="a" style="left:1341.5px;top:387.0px" width="14.5" height="15.2" viewBox="0 0 14 14" preserveAspectRatio="none" fill="#aaa"><circle cx="7" cy="3.800" r="3.600"/><path d="M0 12.500C0 8.500 2 7 4 6.800c.9.800 1.900 1.200 3 1.200s2.100-.4 3-1.200c2 .2 4 1.700 4 5.700 0 .9-.6 1.500-1.500 1.500h-11C.6 14 0 13.400 0 12.500z"/></svg>
<div class="hs" style="left:1355.5px;top:380.200px">2</div>
<svg class="a" style="left:1365.5px;top:385px" width="11" height="14" viewBox="0 0 11 14" fill="#d9d9d9"><path d="M0 6L5.500 0 11 6zM0 8l5.500 6L11 8z"/></svg>
<div class="date" style="left:1391.7px">23.05.2018</div>
<svg class="a" style="left:1400.3px;top:385.500px" width="18" height="18" viewBox="0 0 18 18"><circle cx="9" cy="9" r="8.800" fill="#a6a6a6"/><text x="9" y="13.200" text-anchor="middle" font-family="Liberation Sans, sans-serif" font-size="11.500" font-weight="bold" fill="#fff">%</text></svg>
<div class="hs" style="left:1418.0px;top:380.200px">86</div>
<svg class="a" style="left:1436.6px;top:387.0px" width="14.5" height="15.2" viewBox="0 0 14 14" preserveAspectRatio="none" fill="#aaa"><circle cx="7" cy="3.800" r="3.600"/><path d="M0 12.500C0 8.500 2 7 4 6.800c.9.800 1.900 1.200 3 1.200s2.100-.4 3-1.200c2 .2 4 1.700 4 5.700 0 .9-.6 1.500-1.500 1.500h-11C.6 14 0 13.400 0 12.500z"/></svg>
<div class="hs" style="left:1450.6px;top:380.200px">5</div>
<svg class="a" style="left:1460.6px;top:385px" width="11" height="14" viewBox="0 0 11 14" fill="#d9d9d9"><path d="M0 6L5.500 0 11 6zM0 8l5.500 6L11 8z"/></svg>
<div class="date" style="left:1491.3px">22.05.2018</div>
<svg class="a" style="left:1496.0px;top:385.500px" width="18" height="18" viewBox="0 0 18 18"><circle cx="9" cy="9" r="8.800" fill="#a6a6a6"/><text x="9" y="13.200" text-anchor="middle" font-family="Liberation Sans, sans-serif" font-size="11.500" font-weight="bold" fill="#fff">%</text></svg>
<div class="hs" style="left:1515.2px;top:380.200px">100</div>
<svg class="a" style="left:1540.7px;top:387.0px" width="14.5" height="15.2" viewBox="0 0 14 14" preserveAspectRatio="none" fill="#aaa"><circle cx="7" cy="3.800" r="3.600"/><path d="M0 12.500C0 8.500 2 7 4 6.800c.9.800 1.900 1.200 3 1.200s2.100-.4 3-1.200c2 .2 4 1.700 4 5.700 0 .9-.6 1.500-1.500 1.500h-11C.6 14 0 13.400 0 12.500z"/></svg>
<div class="hs" style="left:1554.7px;top:380.200px">6</div>
<svg class="a" style="left:1564.7px;top:385px" width="11" height="14" viewBox="0 0 11 14" fill="#d9d9d9"><path d="M0 6L5.500 0 11 6zM0 8l5.500 6L11 8z"/></svg>
<div class="a" id="dd"></div>
<div class="a" style="left:1344.500px;top:118.500px;width:0;height:0;border-left:8px solid transparent;border-right:8px solid transparent;border-bottom:9px solid #fff"></div>
<div class="a" style="left:1507px;top:167px;width:28px;height:34px;background:#ecf0f1"></div>
<div class="ddi" style="top:143.7px;transform:scaleX(0.866);transform-origin:0 0">CSV</div>
<div class="dots" style="top:143px"><i style="top:0"></i><i style="top:5px"></i><i style="top:10px"></i></div>
<div class="ddi" style="top:177.7px;transform:scaleX(0.863);transform-origin:0 0">XLSX</div>
<div class="dots" style="top:177px"><i style="top:0"></i><i style="top:5px"></i><i style="top:10px"></i></div>
<div class="ddi" style="top:211.7px;transform:scaleX(0.906);transform-origin:0 0">PDF</div>
<div class="dots" style="top:211px"><i style="top:0"></i><i style="top:5px"></i><i style="top:10px"></i></div>
<div class="ddi" style="top:245.7px;transform:scaleX(0.976);transform-origin:0 0">HTML</div>
<div class="ddi" style="top:279.7px;transform:scaleX(1.004);transform-origin:0 0">Гостевая ссылка</div>
<div class="dots" style="top:279px"><i style="top:0"></i><i style="top:5px"></i><i style="top:10px"></i></div>
<svg class="a" style="left:1440px;top:105px" width="160" height="150" viewBox="0 0 160 150"><ellipse cx="78" cy="74.700" rx="68.200" ry="64.600" fill="none" stroke="#e9372e" stroke-width="5.600" transform="rotate(-8 78 74.700)"/></svg>
</div></body></html>
